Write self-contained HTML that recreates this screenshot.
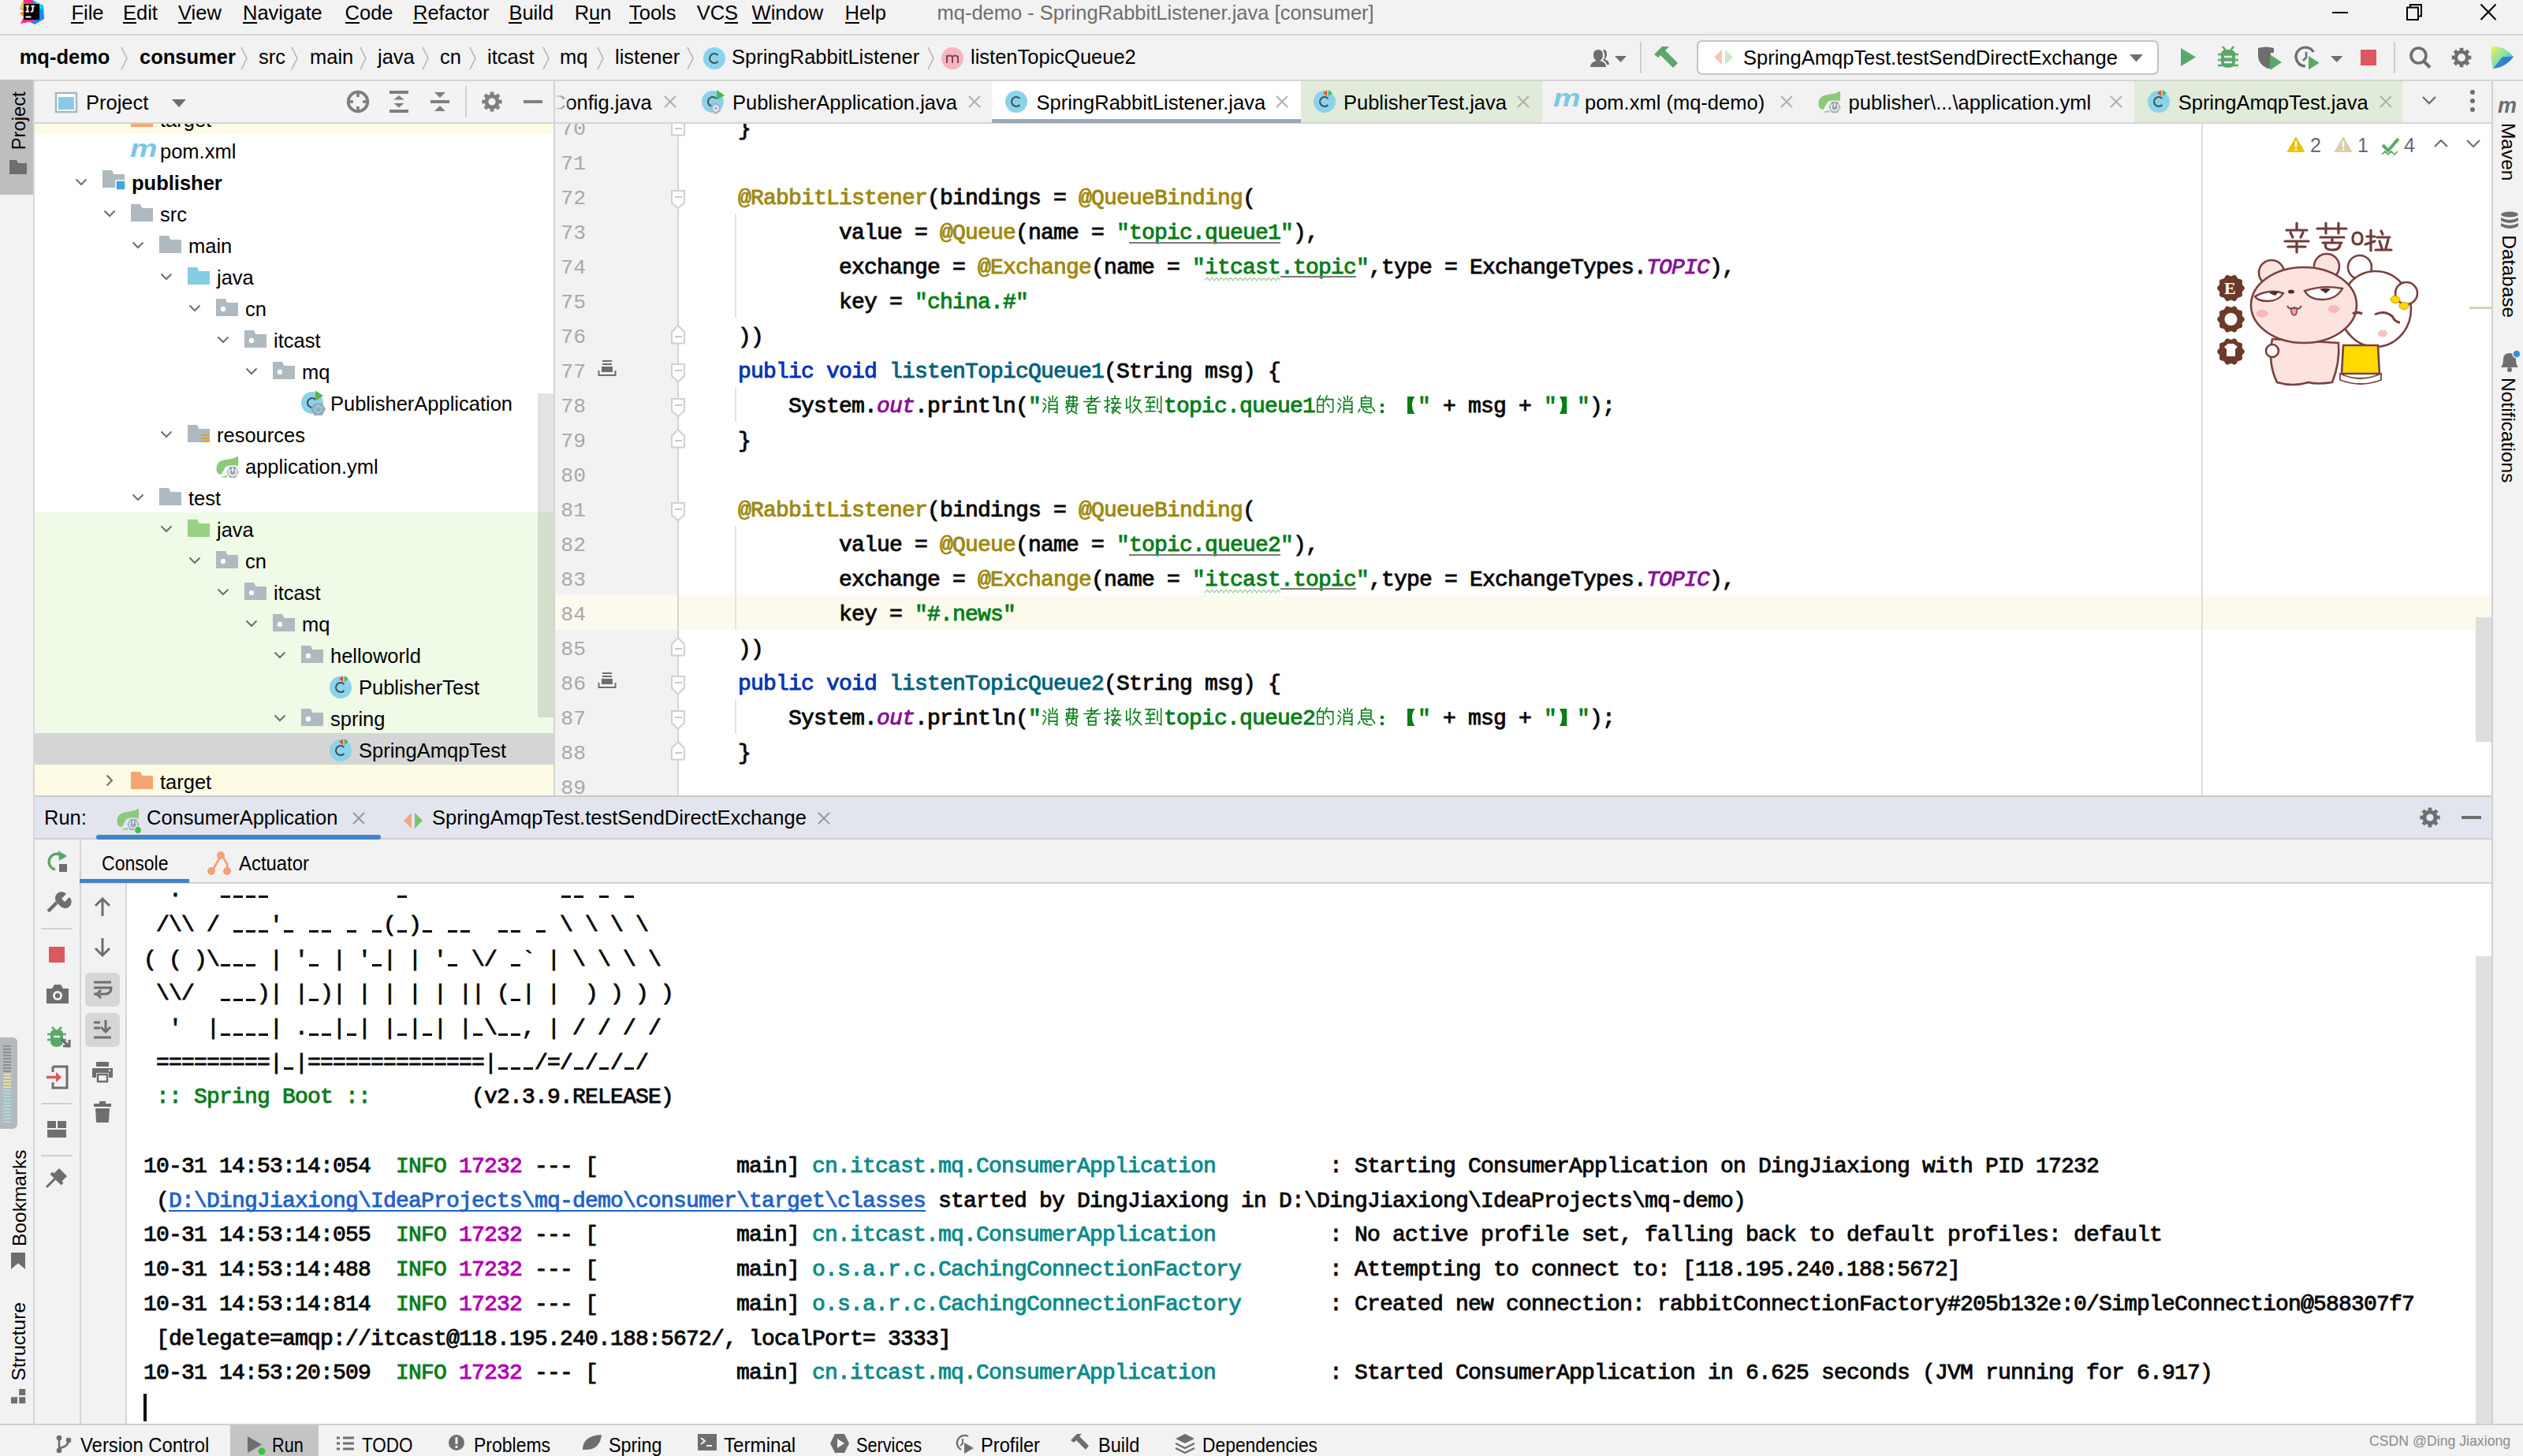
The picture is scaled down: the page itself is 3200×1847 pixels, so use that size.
<!DOCTYPE html><html><head><meta charset="utf-8"><style>html,body{margin:0;padding:0;width:3200px;height:1847px;overflow:hidden;background:#f2f2f2;position:relative}</style></head><body><div style="position:absolute;left:0px;top:0px;width:3200px;height:43px;background:#f2f2f2;"></div>
<div style="position:absolute;left:0px;top:43px;width:3200px;height:2px;background:#d6d6d6;"></div>
<svg style="position:absolute;left:22px;top:0px;overflow:visible;" width="36" height="33" viewBox="0 0 36 33"><path d="M19 0 L33 7 L34 24 L22 31 L12 26 L12 4 Z" fill="#0a8cf8"/>
<path d="M19 0 L33 7 L31 13 L24 5 Z" fill="#12d6f8"/>
<path d="M8 0 L19 0 L22 6 L10 14 L3 11 Z" fill="#ff2a7a"/>
<path d="M8 0 L3 11 L9 12 Z" fill="#ffc83a"/>
<path d="M3 17 L10 13 L11 24 Z" fill="#ff8a1a"/>
<path d="M4 30 L9 20 L24 26 Z" fill="#ff2a8a"/>
<rect x="8" y="5" width="20" height="20" fill="#000"/>
<path d="M10.5 7.8 h4.4 M12.7 7.8 v7 M10.5 14.8 h4.4 M17.5 7.8 h4.2 M19.6 7.8 v5.2 q0 1.8 -1.8 1.8 h-1" stroke="#fff" stroke-width="1.9" fill="none"/>
<rect x="10.5" y="20.5" width="7" height="2" fill="#fff"/></svg>
<div style="position:absolute;left:90.4px;top:1.54px;font-family:'Liberation Sans', sans-serif;font-size:25.5px;color:#000;font-weight:400;white-space:pre;line-height:normal;">File</div>
<div style="position:absolute;left:90.4px;top:28px;width:15.6px;height:2px;background:#000;"></div>
<div style="position:absolute;left:156px;top:1.54px;font-family:'Liberation Sans', sans-serif;font-size:25.5px;color:#000;font-weight:400;white-space:pre;line-height:normal;">Edit</div>
<div style="position:absolute;left:156.0px;top:28px;width:17.0px;height:2px;background:#000;"></div>
<div style="position:absolute;left:226px;top:1.54px;font-family:'Liberation Sans', sans-serif;font-size:25.5px;color:#000;font-weight:400;white-space:pre;line-height:normal;">View</div>
<div style="position:absolute;left:226.0px;top:28px;width:17.0px;height:2px;background:#000;"></div>
<div style="position:absolute;left:308px;top:1.54px;font-family:'Liberation Sans', sans-serif;font-size:25.5px;color:#000;font-weight:400;white-space:pre;line-height:normal;">Navigate</div>
<div style="position:absolute;left:308.0px;top:28px;width:18.4px;height:2px;background:#000;"></div>
<div style="position:absolute;left:437.6px;top:1.54px;font-family:'Liberation Sans', sans-serif;font-size:25.5px;color:#000;font-weight:400;white-space:pre;line-height:normal;">Code</div>
<div style="position:absolute;left:437.6px;top:28px;width:18.4px;height:2px;background:#000;"></div>
<div style="position:absolute;left:524px;top:1.54px;font-family:'Liberation Sans', sans-serif;font-size:25.5px;color:#000;font-weight:400;white-space:pre;line-height:normal;">Refactor</div>
<div style="position:absolute;left:524.0px;top:28px;width:18.4px;height:2px;background:#000;"></div>
<div style="position:absolute;left:645.4px;top:1.54px;font-family:'Liberation Sans', sans-serif;font-size:25.5px;color:#000;font-weight:400;white-space:pre;line-height:normal;">Build</div>
<div style="position:absolute;left:645.4px;top:28px;width:17.0px;height:2px;background:#000;"></div>
<div style="position:absolute;left:728.7px;top:1.54px;font-family:'Liberation Sans', sans-serif;font-size:25.5px;color:#000;font-weight:400;white-space:pre;line-height:normal;">Run</div>
<div style="position:absolute;left:747.1px;top:28px;width:14.2px;height:2px;background:#000;"></div>
<div style="position:absolute;left:798px;top:1.54px;font-family:'Liberation Sans', sans-serif;font-size:25.5px;color:#000;font-weight:400;white-space:pre;line-height:normal;">Tools</div>
<div style="position:absolute;left:798.0px;top:28px;width:15.6px;height:2px;background:#000;"></div>
<div style="position:absolute;left:883.7px;top:1.54px;font-family:'Liberation Sans', sans-serif;font-size:25.5px;color:#000;font-weight:400;white-space:pre;line-height:normal;">VCS</div>
<div style="position:absolute;left:919.1px;top:28px;width:17.0px;height:2px;background:#000;"></div>
<div style="position:absolute;left:953.6px;top:1.54px;font-family:'Liberation Sans', sans-serif;font-size:25.5px;color:#000;font-weight:400;white-space:pre;line-height:normal;">Window</div>
<div style="position:absolute;left:953.6px;top:28px;width:24.1px;height:2px;background:#000;"></div>
<div style="position:absolute;left:1071.6px;top:1.54px;font-family:'Liberation Sans', sans-serif;font-size:25.5px;color:#000;font-weight:400;white-space:pre;line-height:normal;">Help</div>
<div style="position:absolute;left:1071.6px;top:28px;width:18.4px;height:2px;background:#000;"></div>
<div style="position:absolute;left:1188.5px;top:1.54px;font-family:'Liberation Sans', sans-serif;font-size:25.5px;color:#6e6e6e;font-weight:400;white-space:pre;line-height:normal;">mq-demo - SpringRabbitListener.java [consumer]</div>
<div style="position:absolute;left:2958px;top:15px;width:20px;height:2px;background:#000;"></div>
<svg style="position:absolute;left:3050px;top:4px;overflow:visible;" width="24" height="23" viewBox="0 0 24 23"><rect x="3" y="5.5" width="14" height="15.5" fill="none" stroke="#000" stroke-width="2"/><path d="M7 5 V2 H21 V16.5 H17.5" fill="none" stroke="#000" stroke-width="2"/></svg>
<svg style="position:absolute;left:3144px;top:4px;overflow:visible;" width="24" height="23" viewBox="0 0 24 23"><path d="M2.5 1.5 L21.5 21 M21.5 1.5 L2.5 21" stroke="#000" stroke-width="2"/></svg>
<div style="position:absolute;left:0px;top:45px;width:3200px;height:56px;background:#f2f2f2;"></div>
<div style="position:absolute;left:0px;top:101px;width:3200px;height:2px;background:#d4d4d4;"></div>
<div style="position:absolute;left:24.7px;top:57.54px;font-family:'Liberation Sans', sans-serif;font-size:25.5px;color:#000;font-weight:700;white-space:pre;line-height:normal;">mq-demo</div>
<div style="position:absolute;left:177px;top:57.54px;font-family:'Liberation Sans', sans-serif;font-size:25.5px;color:#000;font-weight:700;white-space:pre;line-height:normal;">consumer</div>
<div style="position:absolute;left:328px;top:57.54px;font-family:'Liberation Sans', sans-serif;font-size:25.5px;color:#000;font-weight:400;white-space:pre;line-height:normal;">src</div>
<div style="position:absolute;left:393px;top:57.54px;font-family:'Liberation Sans', sans-serif;font-size:25.5px;color:#000;font-weight:400;white-space:pre;line-height:normal;">main</div>
<div style="position:absolute;left:479px;top:57.54px;font-family:'Liberation Sans', sans-serif;font-size:25.5px;color:#000;font-weight:400;white-space:pre;line-height:normal;">java</div>
<div style="position:absolute;left:558px;top:57.54px;font-family:'Liberation Sans', sans-serif;font-size:25.5px;color:#000;font-weight:400;white-space:pre;line-height:normal;">cn</div>
<div style="position:absolute;left:618px;top:57.54px;font-family:'Liberation Sans', sans-serif;font-size:25.5px;color:#000;font-weight:400;white-space:pre;line-height:normal;">itcast</div>
<div style="position:absolute;left:710px;top:57.54px;font-family:'Liberation Sans', sans-serif;font-size:25.5px;color:#000;font-weight:400;white-space:pre;line-height:normal;">mq</div>
<div style="position:absolute;left:780px;top:57.54px;font-family:'Liberation Sans', sans-serif;font-size:25.5px;color:#000;font-weight:400;white-space:pre;line-height:normal;">listener</div>
<div style="position:absolute;left:928px;top:57.54px;font-family:'Liberation Sans', sans-serif;font-size:25.5px;color:#000;font-weight:400;white-space:pre;line-height:normal;">SpringRabbitListener</div>
<div style="position:absolute;left:1231px;top:57.54px;font-family:'Liberation Sans', sans-serif;font-size:25.5px;color:#000;font-weight:400;white-space:pre;line-height:normal;">listenTopicQueue2</div>
<svg style="position:absolute;left:152px;top:58px;overflow:visible;" width="12" height="32" viewBox="0 0 12 32"><path d="M2 2 L9 16 L2 30" fill="none" stroke="#b5b5b5" stroke-width="1.6"/></svg>
<svg style="position:absolute;left:304px;top:58px;overflow:visible;" width="12" height="32" viewBox="0 0 12 32"><path d="M2 2 L9 16 L2 30" fill="none" stroke="#b5b5b5" stroke-width="1.6"/></svg>
<svg style="position:absolute;left:368px;top:58px;overflow:visible;" width="12" height="32" viewBox="0 0 12 32"><path d="M2 2 L9 16 L2 30" fill="none" stroke="#b5b5b5" stroke-width="1.6"/></svg>
<svg style="position:absolute;left:455px;top:58px;overflow:visible;" width="12" height="32" viewBox="0 0 12 32"><path d="M2 2 L9 16 L2 30" fill="none" stroke="#b5b5b5" stroke-width="1.6"/></svg>
<svg style="position:absolute;left:534px;top:58px;overflow:visible;" width="12" height="32" viewBox="0 0 12 32"><path d="M2 2 L9 16 L2 30" fill="none" stroke="#b5b5b5" stroke-width="1.6"/></svg>
<svg style="position:absolute;left:594px;top:58px;overflow:visible;" width="12" height="32" viewBox="0 0 12 32"><path d="M2 2 L9 16 L2 30" fill="none" stroke="#b5b5b5" stroke-width="1.6"/></svg>
<svg style="position:absolute;left:687px;top:58px;overflow:visible;" width="12" height="32" viewBox="0 0 12 32"><path d="M2 2 L9 16 L2 30" fill="none" stroke="#b5b5b5" stroke-width="1.6"/></svg>
<svg style="position:absolute;left:756px;top:58px;overflow:visible;" width="12" height="32" viewBox="0 0 12 32"><path d="M2 2 L9 16 L2 30" fill="none" stroke="#b5b5b5" stroke-width="1.6"/></svg>
<svg style="position:absolute;left:870px;top:58px;overflow:visible;" width="12" height="32" viewBox="0 0 12 32"><path d="M2 2 L9 16 L2 30" fill="none" stroke="#b5b5b5" stroke-width="1.6"/></svg>
<svg style="position:absolute;left:1175px;top:58px;overflow:visible;" width="12" height="32" viewBox="0 0 12 32"><path d="M2 2 L9 16 L2 30" fill="none" stroke="#b5b5b5" stroke-width="1.6"/></svg>
<svg style="position:absolute;left:890px;top:58px;overflow:visible;" width="32" height="32" viewBox="0 0 32 32"><circle cx="16" cy="16" r="14" fill="#8bd3eb"/><path d="M20.5 12 A6 6 0 1 0 20.5 20" fill="none" stroke="#3f4f57" stroke-width="2"/></svg>
<svg style="position:absolute;left:1193px;top:58px;overflow:visible;" width="32" height="32" viewBox="0 0 32 32"><circle cx="15" cy="16" r="14" fill="#f5b5c0"/><path d="M8 22 V12 M8 14 q3.5-3 7 0 V22 M15 14 q3.5-3 7 0 V22" fill="none" stroke="#7a4650" stroke-width="2"/></svg>
<svg style="position:absolute;left:2012px;top:58px;overflow:visible;" width="56" height="30" viewBox="0 0 56 30"><path d="M5 27 q0-6 8-8 q-4-2-4-7 q0-7 6-7 q6 0 6 7 q0 5-4 7 q8 2 8 8 z" fill="#6e6e6e"/>
<path d="M21 5 q5-1 5 6 q0 4-3 6 q6 2 6 7 h-3 q-1-4-5-6 q3-3 2-8 z" fill="#6e6e6e"/>
<path d="M36 13 h15 l-7.5 8 z" fill="#6e6e6e"/></svg>
<div style="position:absolute;left:2080px;top:53px;width:2px;height:40px;background:#cfcfcf;"></div>
<svg style="position:absolute;left:2096px;top:58px;overflow:visible;" width="34" height="30" viewBox="0 0 34 30"><path d="M2 11 L12 1 L21 1 L16 6 L32 22 L26 28 L10 12 L7 15 Z" fill="#59a869"/></svg>
<div style="position:absolute;left:2152px;top:51px;width:586px;height:44px;background:#fff;border:2px solid #c4c4c4;border-radius:7px;box-sizing:border-box;"></div>
<svg style="position:absolute;left:2172px;top:62px;overflow:visible;" width="30" height="22" viewBox="0 0 30 22"><path d="M12 1 V20 L2 10.5 Z" fill="#f5c7b6"/><path d="M16 1 V20 L26 10.5 Z" fill="#cfe8c4"/></svg>
<div style="position:absolute;left:2211px;top:59.14px;font-family:'Liberation Sans', sans-serif;font-size:25.5px;color:#000;font-weight:400;white-space:pre;line-height:normal;">SpringAmqpTest.testSendDirectExchange</div>
<svg style="position:absolute;left:2700px;top:68px;overflow:visible;" width="20" height="12" viewBox="0 0 20 12"><path d="M1 1 H18 L9.5 10.5 Z" fill="#6e6e6e"/></svg>
<svg style="position:absolute;left:2765px;top:60px;overflow:visible;" width="22" height="26" viewBox="0 0 22 26"><path d="M1 1 L20 12.5 L1 24 Z" fill="#59a869"/></svg>
<svg style="position:absolute;left:2812px;top:58px;overflow:visible;" width="28" height="30" viewBox="0 0 28 30"><path d="M7 1 L11 6 M21 1 L17 6" stroke="#59a869" stroke-width="2.6"/>
<path d="M5 10 q0-5 9-5 q9 0 9 5 v10 q0 8-9 8 q-9 0-9-8 z" fill="#59a869"/>
<path d="M1 11 h26 M1 18 h26 M1 25 h26" stroke="#59a869" stroke-width="2.6"/>
<path d="M9 14 h10 M9 21 h10" stroke="#f2f2f2" stroke-width="2.6"/></svg>
<svg style="position:absolute;left:2862px;top:58px;overflow:visible;" width="34" height="32" viewBox="0 0 34 32"><path d="M2 3 q10-3 20 0 v6 h-4 v16 l2 2 q-3 2-6 2 q-12-6-12-16 z" fill="#6e6e6e"/>
<path d="M17 11 L32 21 L17 31 Z" fill="#59a869"/></svg>
<svg style="position:absolute;left:2908px;top:56px;overflow:visible;" width="36" height="34" viewBox="0 0 36 34"><path d="M26.3 10 A11.9 11.9 0 1 0 15.8 27.9" fill="none" stroke="#6e6e6e" stroke-width="3.4"/>
<path d="M17 10 V17 L13 21" fill="none" stroke="#6e6e6e" stroke-width="2.6"/>
<path d="M20 15 L33.6 23.8 L20 32.6 Z" fill="#59a869"/></svg>
<svg style="position:absolute;left:2956px;top:71px;overflow:visible;" width="16" height="9" viewBox="0 0 16 9"><path d="M0 0 H15.5 L7.75 8 Z" fill="#6e6e6e"/></svg>
<div style="position:absolute;left:2994px;top:63px;width:20px;height:20px;background:#db5860;"></div>
<div style="position:absolute;left:3036px;top:53px;width:2px;height:40px;background:#cfcfcf;"></div>
<svg style="position:absolute;left:3052px;top:56px;overflow:visible;" width="34" height="34" viewBox="0 0 34 34"><circle cx="15.5" cy="14.5" r="9.5" fill="none" stroke="#6e6e6e" stroke-width="3.6"/><path d="M22 21.5 L30 29.5" stroke="#6e6e6e" stroke-width="4"/></svg>
<svg style="position:absolute;left:3108px;top:59px;overflow:visible;" width="28" height="28" viewBox="0 0 28 28"><path d="M26.3 11.6 L26.3 16.4 L22.7 16.3 L21.8 18.6 L24.4 21.0 L21.0 24.4 L18.6 21.8 L16.3 22.7 L16.4 26.3 L11.6 26.3 L11.7 22.7 L9.4 21.8 L7.0 24.4 L3.6 21.0 L6.2 18.6 L5.3 16.3 L1.7 16.4 L1.7 11.6 L5.3 11.7 L6.2 9.4 L3.6 7.0 L7.0 3.6 L9.4 6.2 L11.7 5.3 L11.6 1.7 L16.4 1.7 L16.3 5.3 L18.6 6.2 L21.0 3.6 L24.4 7.0 L21.8 9.4 L22.7 11.7Z" fill="#6e6e6e"/><circle cx="14" cy="14" r="9.4" fill="#6e6e6e"/><circle cx="14" cy="14" r="5" fill="#f2f2f2"/></svg>
<svg style="position:absolute;left:3158px;top:57px;overflow:visible;" width="32" height="32" viewBox="0 0 32 32"><defs><linearGradient id="jbg" x1="0" y1="0" x2="1" y2="1"><stop offset="0" stop-color="#f8f052"/><stop offset="0.5" stop-color="#7fe0b0"/><stop offset="1" stop-color="#1a8ef0"/></linearGradient></defs>
<path d="M2 2 Q18 0 30 15 Q18 30 4 30 Q0 16 2 2 Z" fill="url(#jbg)"/><path d="M16 15 L30 15 Q20 28 4 30 Z" fill="#1f5fd0" opacity="0.7"/></svg>
<div style="position:absolute;left:0px;top:103px;width:42px;height:1705px;background:#f2f2f2;"></div>
<div style="position:absolute;left:42px;top:103px;width:2px;height:1705px;background:#d8d8d8;"></div>
<div style="position:absolute;left:0px;top:101px;width:42px;height:146px;background:#bebebe;"></div>
<div style="position:absolute;left:-13.0px;top:138.7px;width:74.1px;height:28.6px;line-height:28.6px;font-family:'Liberation Sans', sans-serif;font-size:23.8px;color:#000;white-space:pre;transform:rotate(-90deg);transform-origin:50% 50%;text-align:center">Project</div>
<svg style="position:absolute;left:12px;top:203px;overflow:visible;" width="22" height="18" viewBox="0 0 22 18"><path d="M0 0 H9 L11 4 H22 V18 H0 Z" fill="#6e6e6e"/></svg>
<div style="position:absolute;left:0px;top:1316px;width:22px;height:116px;background:#b5b8bd;border-radius:0 6px 6px 0;"></div>
<svg style="position:absolute;left:2px;top:1326px;overflow:visible;" width="14" height="100" viewBox="0 0 14 100"><rect x="2" y="0" width="10" height="2" fill="#8a8d92"/><rect x="2" y="4" width="10" height="2" fill="#8a8d92"/><rect x="2" y="8" width="10" height="2" fill="#8a8d92"/><rect x="2" y="12" width="10" height="2" fill="#8a8d92"/><rect x="2" y="16" width="10" height="2" fill="#8a8d92"/><rect x="2" y="20" width="10" height="2" fill="#8a8d92"/><rect x="2" y="24" width="10" height="2" fill="#8a8d92"/><rect x="2" y="28" width="10" height="2" fill="#8a8d92"/><rect x="2" y="32" width="10" height="2" fill="#8a8d92"/><rect x="2" y="36" width="10" height="2" fill="#e8e0a0"/><rect x="2" y="40" width="10" height="2" fill="#e8e0a0"/><rect x="2" y="44" width="10" height="2" fill="#e8e0a0"/><rect x="2" y="48" width="10" height="2" fill="#e8e0a0"/><rect x="2" y="52" width="10" height="2" fill="#e8e0a0"/><rect x="2" y="56" width="10" height="2" fill="#a8dcd4"/><rect x="2" y="60" width="10" height="2" fill="#a8dcd4"/><rect x="2" y="64" width="10" height="2" fill="#a8dcd4"/><rect x="2" y="68" width="10" height="2" fill="#a8dcd4"/><rect x="2" y="72" width="10" height="2" fill="#a8dcd4"/><rect x="2" y="76" width="10" height="2" fill="#a8dcd4"/><rect x="2" y="80" width="10" height="2" fill="#a8dcd4"/><rect x="2" y="84" width="10" height="2" fill="#a8dcd4"/><rect x="2" y="88" width="10" height="2" fill="#a8dcd4"/><rect x="2" y="92" width="10" height="2" fill="#a8dcd4"/><rect x="2" y="96" width="10" height="2" fill="#a8dcd4"/></svg>
<div style="position:absolute;left:-37.3px;top:1505.3px;width:122.5px;height:29.4px;line-height:29.4px;font-family:'Liberation Sans', sans-serif;font-size:24.5px;color:#000;white-space:pre;transform:rotate(-90deg);transform-origin:50% 50%;text-align:center">Bookmarks</div>
<svg style="position:absolute;left:14px;top:1589px;overflow:visible;" width="19" height="22" viewBox="0 0 19 22"><path d="M0 0 H18 V21 L9 13.5 L0 21 Z" fill="#6e6e6e"/></svg>
<div style="position:absolute;left:-25.7px;top:1687.3px;width:99.4px;height:29.4px;line-height:29.4px;font-family:'Liberation Sans', sans-serif;font-size:24.5px;color:#000;white-space:pre;transform:rotate(-90deg);transform-origin:50% 50%;text-align:center">Structure</div>
<svg style="position:absolute;left:14px;top:1762px;overflow:visible;" width="20" height="20" viewBox="0 0 20 20"><rect x="10.2" y="0" width="8" height="8" fill="#6e6e6e"/><rect x="0" y="10.3" width="8" height="8" fill="#6e6e6e"/><rect x="10.2" y="10.3" width="8" height="8" fill="#6e6e6e"/></svg>
<div style="position:absolute;left:3160px;top:103px;width:40px;height:1705px;background:#f2f2f2;"></div>
<div style="position:absolute;left:3160px;top:103px;width:2px;height:1705px;background:#d0d0d0;"></div>
<svg style="position:absolute;left:3168px;top:124px;overflow:visible;" width="30" height="22" viewBox="0 0 30 22"><text x="0" y="19" font-family="Liberation Sans" font-style="italic" font-weight="700" font-size="27" fill="#6e6e6e">m</text></svg>
<div style="position:absolute;left:3145.2px;top:178.3px;width:73.5px;height:29.4px;line-height:29.4px;font-family:'Liberation Sans', sans-serif;font-size:24.5px;color:#000;white-space:pre;transform:rotate(90deg);transform-origin:50% 50%;text-align:center">Maven</div>
<svg style="position:absolute;left:3170px;top:268px;overflow:visible;" width="26" height="26" viewBox="0 0 26 26"><ellipse cx="13" cy="4" rx="11" ry="3.5" fill="#6e6e6e"/><path d="M2 8 q11 6 22 0 v4 q-11 6 -22 0 z M2 15 q11 6 22 0 v4 q-11 6 -22 0 z" fill="#6e6e6e"/></svg>
<div style="position:absolute;left:3129.6px;top:336.3px;width:104.9px;height:29.4px;line-height:29.4px;font-family:'Liberation Sans', sans-serif;font-size:24.5px;color:#000;white-space:pre;transform:rotate(90deg);transform-origin:50% 50%;text-align:center">Database</div>
<svg style="position:absolute;left:3168px;top:444px;overflow:visible;" width="30" height="28" viewBox="0 0 30 28"><path d="M4 22 q3-3 3-10 q0-8 8-8 q8 0 8 8 q0 7 3 10 z" fill="#6e6e6e"/><circle cx="15" cy="25" r="3" fill="#6e6e6e"/><circle cx="24" cy="5" r="5" fill="#3d8fd6" stroke="#f2f2f2" stroke-width="1.5"/></svg>
<div style="position:absolute;left:3115.3px;top:531.3px;width:133.4px;height:29.4px;line-height:29.4px;font-family:'Liberation Sans', sans-serif;font-size:24.5px;color:#000;white-space:pre;transform:rotate(90deg);transform-origin:50% 50%;text-align:center">Notifications</div>
<div style="position:absolute;left:44px;top:103px;width:658px;height:52px;background:#f3f3f3;"></div>
<div style="position:absolute;left:44px;top:155px;width:658px;height:2px;background:#d4d4d4;"></div>
<div style="position:absolute;left:702px;top:103px;width:2px;height:1705px;background:#d4d4d4;"></div>
<svg style="position:absolute;left:70px;top:117px;overflow:visible;" width="28" height="26" viewBox="0 0 28 26"><rect x="1" y="1" width="26" height="24" fill="#fff" stroke="#a9b7c1" stroke-width="2.5"/><rect x="4" y="6" width="20" height="16" fill="#87cce6"/></svg>
<div style="position:absolute;left:109px;top:115.54px;font-family:'Liberation Sans', sans-serif;font-size:25.5px;color:#000;font-weight:400;white-space:pre;line-height:normal;">Project</div>
<svg style="position:absolute;left:218px;top:126px;overflow:visible;" width="19" height="11" viewBox="0 0 19 11"><path d="M0 0 H18 L9 10 Z" fill="#6e6e6e"/></svg>
<svg style="position:absolute;left:438px;top:113px;overflow:visible;" width="32" height="32" viewBox="0 0 32 32"><circle cx="16" cy="16" r="12.3" fill="none" stroke="#7f7f7f" stroke-width="3.8"/><path d="M16 2 V10 M16 22 V30 M2 16 H10 M22 16 H30" stroke="#7f7f7f" stroke-width="3.6"/></svg>
<svg style="position:absolute;left:494px;top:114px;overflow:visible;" width="24" height="30" viewBox="0 0 24 30"><rect x="0" y="1" width="24" height="4" fill="#7f7f7f"/><rect x="0" y="25" width="24" height="4" fill="#7f7f7f"/><path d="M5.5 12.5 L12 7 L18.5 12.5 Z M5.5 17 L12 22.5 L18.5 17 Z" fill="#7f7f7f"/></svg>
<svg style="position:absolute;left:546px;top:116px;overflow:visible;" width="24" height="26" viewBox="0 0 24 26"><rect x="0" y="11" width="24" height="4" fill="#7f7f7f"/><path d="M5 1 H19 L12 8 Z M5 25 H19 L12 18 Z" fill="#7f7f7f"/></svg>
<div style="position:absolute;left:590px;top:109px;width:2px;height:40px;background:#d0d0d0;"></div>
<svg style="position:absolute;left:610px;top:115px;overflow:visible;" width="28" height="28" viewBox="0 0 28 28"><path d="M26.6 11.6 L26.6 16.4 L22.9 16.3 L21.9 18.7 L24.6 21.2 L21.2 24.6 L18.7 21.9 L16.3 22.9 L16.4 26.6 L11.6 26.6 L11.7 22.9 L9.3 21.9 L6.8 24.6 L3.4 21.2 L6.1 18.7 L5.1 16.3 L1.4 16.4 L1.4 11.6 L5.1 11.7 L6.1 9.3 L3.4 6.8 L6.8 3.4 L9.3 6.1 L11.7 5.1 L11.6 1.4 L16.4 1.4 L16.3 5.1 L18.7 6.1 L21.2 3.4 L24.6 6.8 L21.9 9.3 L22.9 11.7Z" fill="#7f7f7f"/><circle cx="14" cy="14" r="9.6" fill="#7f7f7f"/><circle cx="14" cy="14" r="4.6" fill="#f3f3f3"/></svg>
<div style="position:absolute;left:664px;top:127px;width:24px;height:4px;background:#7f7f7f;"></div>
<div style="position:absolute;left:44px;top:157px;width:658px;height:1651px;background:#fff;"></div>
<div style="position:absolute;left:0;top:0;width:3200px;height:1847px;clip-path:inset(157px 2498px 838px 44px)">
<div style="position:absolute;left:44px;top:157px;width:658px;height:13px;background:#fdfbe4;"></div>
<div style="position:absolute;left:44px;top:650px;width:658px;height:280px;background:#effae7;"></div>
<div style="position:absolute;left:44px;top:930px;width:658px;height:40px;background:#d5d5d5;"></div>
<div style="position:absolute;left:44px;top:970px;width:658px;height:38px;background:#fdfbe4;"></div>
<svg style="position:absolute;left:134px;top:142px;overflow:visible;" width="10" height="16" viewBox="0 0 10 16"><path d="M1.5 1.5 L8 8 L1.5 14.5" fill="none" stroke="#6e6e6e" stroke-width="2"/></svg>
<svg style="position:absolute;left:166px;top:139px;overflow:visible;" width="30" height="26" viewBox="0 0 30 26"><path d="M0 0 H12 L14.5 5 H28 V22 H0 Z" fill="#f4a672"/></svg>
<div style="position:absolute;left:203px;top:137.54px;font-family:'Liberation Sans', sans-serif;font-size:25.5px;color:#000;font-weight:400;white-space:pre;line-height:normal;">target</div>
<svg style="position:absolute;left:165px;top:178px;overflow:visible;" width="34" height="26" viewBox="0 0 34 26"><text x="0" y="22" font-family="Liberation Sans" font-style="italic" font-weight="700" font-size="37" fill="#7cc7e6" transform="scale(1.05 0.85) translate(0 3)">m</text></svg>
<div style="position:absolute;left:203px;top:177.54px;font-family:'Liberation Sans', sans-serif;font-size:25.5px;color:#000;font-weight:400;white-space:pre;line-height:normal;">pom.xml</div>
<svg style="position:absolute;left:95px;top:226px;overflow:visible;" width="16" height="10" viewBox="0 0 16 10"><path d="M1.5 1.5 L8 8 L14.5 1.5" fill="none" stroke="#6e6e6e" stroke-width="2"/></svg>
<svg style="position:absolute;left:130px;top:216px;overflow:visible;" width="30" height="28" viewBox="0 0 30 28"><path d="M0 0 H12 L14.5 5 H28 V22 H0 Z" fill="#aeb9c0"/><rect x="17" y="13" width="12" height="12" fill="#3ea8de" stroke="#fff" stroke-width="1.5"/></svg>
<div style="position:absolute;left:167px;top:217.54px;font-family:'Liberation Sans', sans-serif;font-size:25.5px;color:#000;font-weight:700;white-space:pre;line-height:normal;">publisher</div>
<svg style="position:absolute;left:131px;top:266px;overflow:visible;" width="16" height="10" viewBox="0 0 16 10"><path d="M1.5 1.5 L8 8 L14.5 1.5" fill="none" stroke="#6e6e6e" stroke-width="2"/></svg>
<svg style="position:absolute;left:166px;top:259px;overflow:visible;" width="30" height="26" viewBox="0 0 30 26"><path d="M0 0 H12 L14.5 5 H28 V22 H0 Z" fill="#aeb9c0"/></svg>
<div style="position:absolute;left:203px;top:257.54px;font-family:'Liberation Sans', sans-serif;font-size:25.5px;color:#000;font-weight:400;white-space:pre;line-height:normal;">src</div>
<svg style="position:absolute;left:167px;top:306px;overflow:visible;" width="16" height="10" viewBox="0 0 16 10"><path d="M1.5 1.5 L8 8 L14.5 1.5" fill="none" stroke="#6e6e6e" stroke-width="2"/></svg>
<svg style="position:absolute;left:202px;top:299px;overflow:visible;" width="30" height="26" viewBox="0 0 30 26"><path d="M0 0 H12 L14.5 5 H28 V22 H0 Z" fill="#aeb9c0"/></svg>
<div style="position:absolute;left:239px;top:297.54px;font-family:'Liberation Sans', sans-serif;font-size:25.5px;color:#000;font-weight:400;white-space:pre;line-height:normal;">main</div>
<svg style="position:absolute;left:203px;top:346px;overflow:visible;" width="16" height="10" viewBox="0 0 16 10"><path d="M1.5 1.5 L8 8 L14.5 1.5" fill="none" stroke="#6e6e6e" stroke-width="2"/></svg>
<svg style="position:absolute;left:238px;top:339px;overflow:visible;" width="30" height="26" viewBox="0 0 30 26"><path d="M0 0 H12 L14.5 5 H28 V22 H0 Z" fill="#87cce6"/></svg>
<div style="position:absolute;left:275px;top:337.54px;font-family:'Liberation Sans', sans-serif;font-size:25.5px;color:#000;font-weight:400;white-space:pre;line-height:normal;">java</div>
<svg style="position:absolute;left:239px;top:386px;overflow:visible;" width="16" height="10" viewBox="0 0 16 10"><path d="M1.5 1.5 L8 8 L14.5 1.5" fill="none" stroke="#6e6e6e" stroke-width="2"/></svg>
<svg style="position:absolute;left:274px;top:379px;overflow:visible;" width="30" height="26" viewBox="0 0 30 26"><path d="M0 0 H12 L14.5 5 H28 V22 H0 Z" fill="#aeb9c0"/><circle cx="9" cy="13" r="3.2" fill="#fff"/></svg>
<div style="position:absolute;left:311px;top:377.54px;font-family:'Liberation Sans', sans-serif;font-size:25.5px;color:#000;font-weight:400;white-space:pre;line-height:normal;">cn</div>
<svg style="position:absolute;left:275px;top:426px;overflow:visible;" width="16" height="10" viewBox="0 0 16 10"><path d="M1.5 1.5 L8 8 L14.5 1.5" fill="none" stroke="#6e6e6e" stroke-width="2"/></svg>
<svg style="position:absolute;left:310px;top:419px;overflow:visible;" width="30" height="26" viewBox="0 0 30 26"><path d="M0 0 H12 L14.5 5 H28 V22 H0 Z" fill="#aeb9c0"/><circle cx="9" cy="13" r="3.2" fill="#fff"/></svg>
<div style="position:absolute;left:347px;top:417.54px;font-family:'Liberation Sans', sans-serif;font-size:25.5px;color:#000;font-weight:400;white-space:pre;line-height:normal;">itcast</div>
<svg style="position:absolute;left:311px;top:466px;overflow:visible;" width="16" height="10" viewBox="0 0 16 10"><path d="M1.5 1.5 L8 8 L14.5 1.5" fill="none" stroke="#6e6e6e" stroke-width="2"/></svg>
<svg style="position:absolute;left:346px;top:459px;overflow:visible;" width="30" height="26" viewBox="0 0 30 26"><path d="M0 0 H12 L14.5 5 H28 V22 H0 Z" fill="#aeb9c0"/><circle cx="9" cy="13" r="3.2" fill="#fff"/></svg>
<div style="position:absolute;left:383px;top:457.54px;font-family:'Liberation Sans', sans-serif;font-size:25.5px;color:#000;font-weight:400;white-space:pre;line-height:normal;">mq</div>
<svg style="position:absolute;left:382px;top:495px;overflow:visible;" width="34" height="34" viewBox="0 0 34 34"><circle cx="14" cy="16" r="14" fill="#8bd3eb"/><path d="M18.5 12 A6 6 0 1 0 18.5 20" fill="none" stroke="#3f4f57" stroke-width="2"/><path d="M18 0.5 L28 7 L18 13.5 Z" fill="#5fb43c"/><path d="M16.5 16.5 h10 l4.5 7.5 l-4.5 8 h-10 l-4.5 -8 z" fill="#9aa7b0"/><circle cx="21.5" cy="24" r="4.3" fill="none" stroke="#8bd3eb" stroke-width="2"/><path d="M21.5 18.5 v5" stroke="#8bd3eb" stroke-width="2"/></svg>
<div style="position:absolute;left:419px;top:497.54px;font-family:'Liberation Sans', sans-serif;font-size:25.5px;color:#000;font-weight:400;white-space:pre;line-height:normal;">PublisherApplication</div>
<svg style="position:absolute;left:203px;top:546px;overflow:visible;" width="16" height="10" viewBox="0 0 16 10"><path d="M1.5 1.5 L8 8 L14.5 1.5" fill="none" stroke="#6e6e6e" stroke-width="2"/></svg>
<svg style="position:absolute;left:238px;top:539px;overflow:visible;" width="30" height="26" viewBox="0 0 30 26"><path d="M0 0 H12 L14.5 5 H28 V22 H0 Z" fill="#aeb9c0"/><path d="M17 13 H28 M17 17 H28 M17 21 H28" stroke="#e0a030" stroke-width="2"/></svg>
<div style="position:absolute;left:275px;top:537.54px;font-family:'Liberation Sans', sans-serif;font-size:25.5px;color:#000;font-weight:400;white-space:pre;line-height:normal;">resources</div>
<svg style="position:absolute;left:274px;top:575px;overflow:visible;" width="34" height="34" viewBox="0 0 34 34"><path d="M0.5 21 Q0 9 13 8 Q23 7 28 3.5 Q28.5 12 27.5 16.5 H12.5 L7 26.5 Q2 28 0.5 21 Z" fill="#8cc97a"/><path d="M6 30.5 Q9 28.5 14.5 28 V30.5 Z" fill="#8cc97a"/><path d="M12.5 24 L16.75 16.3 H25.25 L29.5 24 L25.25 31.7 H16.75 Z" fill="#9aa7b0" stroke="#fff" stroke-width="1.6"/><path d="M18 20.5 A4.6 4.6 0 1 0 24 20.5" fill="none" stroke="#fff" stroke-width="1.8"/><path d="M21 18.5 V23.5" stroke="#fff" stroke-width="1.8"/></svg>
<div style="position:absolute;left:311px;top:577.54px;font-family:'Liberation Sans', sans-serif;font-size:25.5px;color:#000;font-weight:400;white-space:pre;line-height:normal;">application.yml</div>
<svg style="position:absolute;left:167px;top:626px;overflow:visible;" width="16" height="10" viewBox="0 0 16 10"><path d="M1.5 1.5 L8 8 L14.5 1.5" fill="none" stroke="#6e6e6e" stroke-width="2"/></svg>
<svg style="position:absolute;left:202px;top:619px;overflow:visible;" width="30" height="26" viewBox="0 0 30 26"><path d="M0 0 H12 L14.5 5 H28 V22 H0 Z" fill="#aeb9c0"/></svg>
<div style="position:absolute;left:239px;top:617.54px;font-family:'Liberation Sans', sans-serif;font-size:25.5px;color:#000;font-weight:400;white-space:pre;line-height:normal;">test</div>
<svg style="position:absolute;left:203px;top:666px;overflow:visible;" width="16" height="10" viewBox="0 0 16 10"><path d="M1.5 1.5 L8 8 L14.5 1.5" fill="none" stroke="#6e6e6e" stroke-width="2"/></svg>
<svg style="position:absolute;left:238px;top:659px;overflow:visible;" width="30" height="26" viewBox="0 0 30 26"><path d="M0 0 H12 L14.5 5 H28 V22 H0 Z" fill="#99d184"/></svg>
<div style="position:absolute;left:275px;top:657.54px;font-family:'Liberation Sans', sans-serif;font-size:25.5px;color:#000;font-weight:400;white-space:pre;line-height:normal;">java</div>
<svg style="position:absolute;left:239px;top:706px;overflow:visible;" width="16" height="10" viewBox="0 0 16 10"><path d="M1.5 1.5 L8 8 L14.5 1.5" fill="none" stroke="#6e6e6e" stroke-width="2"/></svg>
<svg style="position:absolute;left:274px;top:699px;overflow:visible;" width="30" height="26" viewBox="0 0 30 26"><path d="M0 0 H12 L14.5 5 H28 V22 H0 Z" fill="#aeb9c0"/><circle cx="9" cy="13" r="3.2" fill="#fff"/></svg>
<div style="position:absolute;left:311px;top:697.54px;font-family:'Liberation Sans', sans-serif;font-size:25.5px;color:#000;font-weight:400;white-space:pre;line-height:normal;">cn</div>
<svg style="position:absolute;left:275px;top:746px;overflow:visible;" width="16" height="10" viewBox="0 0 16 10"><path d="M1.5 1.5 L8 8 L14.5 1.5" fill="none" stroke="#6e6e6e" stroke-width="2"/></svg>
<svg style="position:absolute;left:310px;top:739px;overflow:visible;" width="30" height="26" viewBox="0 0 30 26"><path d="M0 0 H12 L14.5 5 H28 V22 H0 Z" fill="#aeb9c0"/><circle cx="9" cy="13" r="3.2" fill="#fff"/></svg>
<div style="position:absolute;left:347px;top:737.54px;font-family:'Liberation Sans', sans-serif;font-size:25.5px;color:#000;font-weight:400;white-space:pre;line-height:normal;">itcast</div>
<svg style="position:absolute;left:311px;top:786px;overflow:visible;" width="16" height="10" viewBox="0 0 16 10"><path d="M1.5 1.5 L8 8 L14.5 1.5" fill="none" stroke="#6e6e6e" stroke-width="2"/></svg>
<svg style="position:absolute;left:346px;top:779px;overflow:visible;" width="30" height="26" viewBox="0 0 30 26"><path d="M0 0 H12 L14.5 5 H28 V22 H0 Z" fill="#aeb9c0"/><circle cx="9" cy="13" r="3.2" fill="#fff"/></svg>
<div style="position:absolute;left:383px;top:777.54px;font-family:'Liberation Sans', sans-serif;font-size:25.5px;color:#000;font-weight:400;white-space:pre;line-height:normal;">mq</div>
<svg style="position:absolute;left:347px;top:826px;overflow:visible;" width="16" height="10" viewBox="0 0 16 10"><path d="M1.5 1.5 L8 8 L14.5 1.5" fill="none" stroke="#6e6e6e" stroke-width="2"/></svg>
<svg style="position:absolute;left:382px;top:819px;overflow:visible;" width="30" height="26" viewBox="0 0 30 26"><path d="M0 0 H12 L14.5 5 H28 V22 H0 Z" fill="#aeb9c0"/><circle cx="9" cy="13" r="3.2" fill="#fff"/></svg>
<div style="position:absolute;left:419px;top:817.54px;font-family:'Liberation Sans', sans-serif;font-size:25.5px;color:#000;font-weight:400;white-space:pre;line-height:normal;">helloworld</div>
<svg style="position:absolute;left:418px;top:855px;overflow:visible;" width="34" height="32" viewBox="0 0 34 32"><circle cx="14" cy="17" r="14" fill="#8bd3eb"/><path d="M18.5 13 A6 6 0 1 0 18.5 21" fill="none" stroke="#3f4f57" stroke-width="2"/><path d="M17 2 L12 6 L17 10 Z" fill="#e4572e"/><path d="M19 2 L24 6 L19 10 Z" fill="#4fb848"/></svg>
<div style="position:absolute;left:455px;top:857.54px;font-family:'Liberation Sans', sans-serif;font-size:25.5px;color:#000;font-weight:400;white-space:pre;line-height:normal;">PublisherTest</div>
<svg style="position:absolute;left:347px;top:906px;overflow:visible;" width="16" height="10" viewBox="0 0 16 10"><path d="M1.5 1.5 L8 8 L14.5 1.5" fill="none" stroke="#6e6e6e" stroke-width="2"/></svg>
<svg style="position:absolute;left:382px;top:899px;overflow:visible;" width="30" height="26" viewBox="0 0 30 26"><path d="M0 0 H12 L14.5 5 H28 V22 H0 Z" fill="#aeb9c0"/><circle cx="9" cy="13" r="3.2" fill="#fff"/></svg>
<div style="position:absolute;left:419px;top:897.54px;font-family:'Liberation Sans', sans-serif;font-size:25.5px;color:#000;font-weight:400;white-space:pre;line-height:normal;">spring</div>
<svg style="position:absolute;left:418px;top:935px;overflow:visible;" width="34" height="32" viewBox="0 0 34 32"><circle cx="14" cy="17" r="14" fill="#8bd3eb"/><path d="M18.5 13 A6 6 0 1 0 18.5 21" fill="none" stroke="#3f4f57" stroke-width="2"/><path d="M17 2 L12 6 L17 10 Z" fill="#e4572e"/><path d="M19 2 L24 6 L19 10 Z" fill="#4fb848"/></svg>
<div style="position:absolute;left:455px;top:937.54px;font-family:'Liberation Sans', sans-serif;font-size:25.5px;color:#000;font-weight:400;white-space:pre;line-height:normal;">SpringAmqpTest</div>
<svg style="position:absolute;left:134px;top:982px;overflow:visible;" width="10" height="16" viewBox="0 0 10 16"><path d="M1.5 1.5 L8 8 L1.5 14.5" fill="none" stroke="#6e6e6e" stroke-width="2"/></svg>
<svg style="position:absolute;left:166px;top:979px;overflow:visible;" width="30" height="26" viewBox="0 0 30 26"><path d="M0 0 H12 L14.5 5 H28 V22 H0 Z" fill="#f4a672"/></svg>
<div style="position:absolute;left:203px;top:977.54px;font-family:'Liberation Sans', sans-serif;font-size:25.5px;color:#000;font-weight:400;white-space:pre;line-height:normal;">target</div>
<div style="position:absolute;left:682px;top:499px;width:20px;height:411px;background:rgba(0,0,0,0.11);"></div>
</div>
<div style="position:absolute;left:704px;top:103px;width:2456px;height:52px;background:#f2f2f2;"></div>
<div style="position:absolute;left:704px;top:155px;width:2456px;height:2px;background:#d4d4d4;"></div>
<div style="position:absolute;left:1258px;top:103px;width:392px;height:52px;background:#fff;"></div>
<div style="position:absolute;left:1258px;top:151px;width:392px;height:5px;background:#9ca7b8;"></div>
<div style="position:absolute;left:1650px;top:103px;width:306px;height:52px;background:#e1ebd9;"></div>
<div style="position:absolute;left:2707px;top:103px;width:340px;height:52px;background:#e1ebd9;"></div>
<div style="position:absolute;left:704px;top:103px;width:130px;height:52px;overflow:hidden">
<div style="position:absolute;left:-5px;top:12.54px;font-family:'Liberation Sans', sans-serif;font-size:25.5px;color:#000;font-weight:400;white-space:pre;line-height:normal;">Config.java</div>
<div style="position:absolute;left:0;top:0;width:22px;height:52px;background:linear-gradient(to right,#f2f2f2 0%,rgba(242,242,242,0.6) 50%,rgba(242,242,242,0) 100%)"></div>
</div>
<svg style="position:absolute;left:842px;top:121px;overflow:visible;" width="16" height="16" viewBox="0 0 16 16"><path d="M1 1 L15 15 M15 1 L1 15" stroke="#b0b0b0" stroke-width="2"/></svg>
<svg style="position:absolute;left:890px;top:113px;overflow:visible;" width="36" height="34" viewBox="0 0 36 34"><circle cx="14" cy="16" r="14" fill="#8bd3eb"/><path d="M18.5 12 A6 6 0 1 0 18.5 20" fill="none" stroke="#3f4f57" stroke-width="2"/><path d="M19 1 L29 8 L19 14 Z" fill="#4fb848"/><path d="M12 21 l6-4 l6 4 v7 l-6 4 l-6-4 z" fill="#a9b7c1"/><circle cx="18" cy="24.5" r="3" fill="none" stroke="#fff" stroke-width="1.3"/></svg>
<div style="position:absolute;left:929px;top:115.54px;font-family:'Liberation Sans', sans-serif;font-size:25.5px;color:#000;font-weight:400;white-space:pre;line-height:normal;">PublisherApplication.java</div>
<svg style="position:absolute;left:1228px;top:121px;overflow:visible;" width="16" height="16" viewBox="0 0 16 16"><path d="M1 1 L15 15 M15 1 L1 15" stroke="#b0b0b0" stroke-width="2"/></svg>
<svg style="position:absolute;left:1275px;top:113px;overflow:visible;" width="30" height="32" viewBox="0 0 30 32"><circle cx="14" cy="16" r="14" fill="#8bd3eb"/><path d="M18.5 12 A6 6 0 1 0 18.5 20" fill="none" stroke="#3f4f57" stroke-width="2"/></svg>
<div style="position:absolute;left:1314.5px;top:115.54px;font-family:'Liberation Sans', sans-serif;font-size:25.5px;color:#000;font-weight:400;white-space:pre;line-height:normal;">SpringRabbitListener.java</div>
<svg style="position:absolute;left:1618px;top:121px;overflow:visible;" width="16" height="16" viewBox="0 0 16 16"><path d="M1 1 L15 15 M15 1 L1 15" stroke="#b0b0b0" stroke-width="2"/></svg>
<svg style="position:absolute;left:1666px;top:111px;overflow:visible;" width="34" height="34" viewBox="0 0 34 34"><circle cx="14" cy="18" r="14" fill="#8bd3eb"/><path d="M18.5 14 A6 6 0 1 0 18.5 22" fill="none" stroke="#3f4f57" stroke-width="2"/><path d="M17 3 L12 7 L17 11 Z" fill="#e4572e"/><path d="M19 3 L24 7 L19 11 Z" fill="#4fb848"/></svg>
<div style="position:absolute;left:1704px;top:115.54px;font-family:'Liberation Sans', sans-serif;font-size:25.5px;color:#000;font-weight:400;white-space:pre;line-height:normal;">PublisherTest.java</div>
<svg style="position:absolute;left:1924px;top:121px;overflow:visible;" width="16" height="16" viewBox="0 0 16 16"><path d="M1 1 L15 15 M15 1 L1 15" stroke="#b0b0b0" stroke-width="2"/></svg>
<svg style="position:absolute;left:1970px;top:114px;overflow:visible;" width="34" height="26" viewBox="0 0 34 26"><text x="0" y="22" font-family="Liberation Sans" font-style="italic" font-weight="700" font-size="37" fill="#7cc7e6" transform="scale(1.05 0.85) translate(0 3)">m</text></svg>
<div style="position:absolute;left:2010px;top:115.54px;font-family:'Liberation Sans', sans-serif;font-size:25.5px;color:#000;font-weight:400;white-space:pre;line-height:normal;">pom.xml (mq-demo)</div>
<svg style="position:absolute;left:2258px;top:121px;overflow:visible;" width="16" height="16" viewBox="0 0 16 16"><path d="M1 1 L15 15 M15 1 L1 15" stroke="#b0b0b0" stroke-width="2"/></svg>
<svg style="position:absolute;left:2306px;top:112px;overflow:visible;" width="34" height="34" viewBox="0 0 34 34"><path d="M0.5 21 Q0 9 13 8 Q23 7 28 3.5 Q28.5 12 27.5 16.5 H12.5 L7 26.5 Q2 28 0.5 21 Z" fill="#8cc97a"/><path d="M6 30.5 Q9 28.5 14.5 28 V30.5 Z" fill="#8cc97a"/><path d="M12.5 24 L16.75 16.3 H25.25 L29.5 24 L25.25 31.7 H16.75 Z" fill="#9aa7b0" stroke="#f2f2f2" stroke-width="1.6"/><path d="M18 20.5 A4.6 4.6 0 1 0 24 20.5" fill="none" stroke="#f2f2f2" stroke-width="1.8"/><path d="M21 18.5 V23.5" stroke="#f2f2f2" stroke-width="1.8"/></svg>
<div style="position:absolute;left:2344.6px;top:115.54px;font-family:'Liberation Sans', sans-serif;font-size:25.5px;color:#000;font-weight:400;white-space:pre;line-height:normal;">publisher\...\application.yml</div>
<svg style="position:absolute;left:2676px;top:121px;overflow:visible;" width="16" height="16" viewBox="0 0 16 16"><path d="M1 1 L15 15 M15 1 L1 15" stroke="#b0b0b0" stroke-width="2"/></svg>
<svg style="position:absolute;left:2724px;top:111px;overflow:visible;" width="34" height="34" viewBox="0 0 34 34"><circle cx="14" cy="18" r="14" fill="#8bd3eb"/><path d="M18.5 14 A6 6 0 1 0 18.5 22" fill="none" stroke="#3f4f57" stroke-width="2"/><path d="M17 3 L12 7 L17 11 Z" fill="#e4572e"/><path d="M19 3 L24 7 L19 11 Z" fill="#4fb848"/></svg>
<div style="position:absolute;left:2762.7px;top:115.54px;font-family:'Liberation Sans', sans-serif;font-size:25.5px;color:#000;font-weight:400;white-space:pre;line-height:normal;">SpringAmqpTest.java</div>
<svg style="position:absolute;left:3018px;top:121px;overflow:visible;" width="16" height="16" viewBox="0 0 16 16"><path d="M1 1 L15 15 M15 1 L1 15" stroke="#b0b0b0" stroke-width="2"/></svg>
<svg style="position:absolute;left:3071px;top:121px;overflow:visible;" width="20" height="14" viewBox="0 0 20 14"><path d="M2 2 L10 10 L18 2" fill="none" stroke="#6e6e6e" stroke-width="2.4"/></svg>
<svg style="position:absolute;left:3131px;top:113px;overflow:visible;" width="10" height="30" viewBox="0 0 10 30"><circle cx="5" cy="4" r="3" fill="#6e6e6e"/><circle cx="5" cy="15" r="3" fill="#6e6e6e"/><circle cx="5" cy="26" r="3" fill="#6e6e6e"/></svg>
<div style="position:absolute;left:704px;top:157px;width:2456px;height:852px;background:#fff;"></div>
<div style="position:absolute;left:704px;top:157px;width:155px;height:852px;background:#f2f2f2;"></div>
<div style="position:absolute;left:859px;top:157px;width:2px;height:852px;background:#d5d5d5;"></div>
<div style="position:absolute;left:704px;top:755px;width:2456px;height:44px;background:#fcfaed;"></div>
<div style="position:absolute;left:859px;top:755px;width:2px;height:44px;background:#d5d5d5;"></div>
<div style="position:absolute;left:2792px;top:157px;width:2px;height:852px;background:#dedede;"></div>
<div style="position:absolute;left:704px;top:157px;width:2456px;height:852px;overflow:hidden">
<div style="position:absolute;left:7.3px;top:-7.9px;font-family:'Liberation Mono', monospace;font-size:26.4px;color:#a8a8a8;white-space:pre;line-height:normal">70</div>
<div style="position:absolute;left:7.3px;top:36.1px;font-family:'Liberation Mono', monospace;font-size:26.4px;color:#a8a8a8;white-space:pre;line-height:normal">71</div>
<div style="position:absolute;left:7.3px;top:80.1px;font-family:'Liberation Mono', monospace;font-size:26.4px;color:#a8a8a8;white-space:pre;line-height:normal">72</div>
<div style="position:absolute;left:7.3px;top:124.1px;font-family:'Liberation Mono', monospace;font-size:26.4px;color:#a8a8a8;white-space:pre;line-height:normal">73</div>
<div style="position:absolute;left:7.3px;top:168.1px;font-family:'Liberation Mono', monospace;font-size:26.4px;color:#a8a8a8;white-space:pre;line-height:normal">74</div>
<div style="position:absolute;left:7.3px;top:212.1px;font-family:'Liberation Mono', monospace;font-size:26.4px;color:#a8a8a8;white-space:pre;line-height:normal">75</div>
<div style="position:absolute;left:7.3px;top:256.1px;font-family:'Liberation Mono', monospace;font-size:26.4px;color:#a8a8a8;white-space:pre;line-height:normal">76</div>
<div style="position:absolute;left:7.3px;top:300.1px;font-family:'Liberation Mono', monospace;font-size:26.4px;color:#a8a8a8;white-space:pre;line-height:normal">77</div>
<div style="position:absolute;left:7.3px;top:344.1px;font-family:'Liberation Mono', monospace;font-size:26.4px;color:#a8a8a8;white-space:pre;line-height:normal">78</div>
<div style="position:absolute;left:7.3px;top:388.1px;font-family:'Liberation Mono', monospace;font-size:26.4px;color:#a8a8a8;white-space:pre;line-height:normal">79</div>
<div style="position:absolute;left:7.3px;top:432.1px;font-family:'Liberation Mono', monospace;font-size:26.4px;color:#a8a8a8;white-space:pre;line-height:normal">80</div>
<div style="position:absolute;left:7.3px;top:476.1px;font-family:'Liberation Mono', monospace;font-size:26.4px;color:#a8a8a8;white-space:pre;line-height:normal">81</div>
<div style="position:absolute;left:7.3px;top:520.1px;font-family:'Liberation Mono', monospace;font-size:26.4px;color:#a8a8a8;white-space:pre;line-height:normal">82</div>
<div style="position:absolute;left:7.3px;top:564.1px;font-family:'Liberation Mono', monospace;font-size:26.4px;color:#a8a8a8;white-space:pre;line-height:normal">83</div>
<div style="position:absolute;left:7.3px;top:608.1px;font-family:'Liberation Mono', monospace;font-size:26.4px;color:#a8a8a8;white-space:pre;line-height:normal">84</div>
<div style="position:absolute;left:7.3px;top:652.1px;font-family:'Liberation Mono', monospace;font-size:26.4px;color:#a8a8a8;white-space:pre;line-height:normal">85</div>
<div style="position:absolute;left:7.3px;top:696.1px;font-family:'Liberation Mono', monospace;font-size:26.4px;color:#a8a8a8;white-space:pre;line-height:normal">86</div>
<div style="position:absolute;left:7.3px;top:740.1px;font-family:'Liberation Mono', monospace;font-size:26.4px;color:#a8a8a8;white-space:pre;line-height:normal">87</div>
<div style="position:absolute;left:7.3px;top:784.1px;font-family:'Liberation Mono', monospace;font-size:26.4px;color:#a8a8a8;white-space:pre;line-height:normal">88</div>
<div style="position:absolute;left:7.3px;top:828.1px;font-family:'Liberation Mono', monospace;font-size:26.4px;color:#a8a8a8;white-space:pre;line-height:normal">89</div>
<div style="position:absolute;left:168.0px;top:-9.2px;font-family:'Liberation Mono', monospace;font-size:28px;letter-spacing:-0.803px;color:#080808;white-space:pre;line-height:normal;-webkit-text-stroke-width:0.9px;">    }</div>

<div style="position:absolute;left:168.0px;top:78.8px;font-family:'Liberation Mono', monospace;font-size:28px;letter-spacing:-0.803px;color:#080808;white-space:pre;line-height:normal;-webkit-text-stroke-width:0.9px;">    </div><div style="position:absolute;left:232.0px;top:78.8px;font-family:'Liberation Mono', monospace;font-size:28px;letter-spacing:-0.803px;color:#9e880d;white-space:pre;line-height:normal;-webkit-text-stroke-width:0.9px;">@RabbitListener</div><div style="position:absolute;left:472.0px;top:78.8px;font-family:'Liberation Mono', monospace;font-size:28px;letter-spacing:-0.803px;color:#080808;white-space:pre;line-height:normal;-webkit-text-stroke-width:0.9px;">(bindings = </div><div style="position:absolute;left:664.0px;top:78.8px;font-family:'Liberation Mono', monospace;font-size:28px;letter-spacing:-0.803px;color:#9e880d;white-space:pre;line-height:normal;-webkit-text-stroke-width:0.9px;">@QueueBinding</div><div style="position:absolute;left:872.0px;top:78.8px;font-family:'Liberation Mono', monospace;font-size:28px;letter-spacing:-0.803px;color:#080808;white-space:pre;line-height:normal;-webkit-text-stroke-width:0.9px;">(</div>
<div style="position:absolute;left:168.0px;top:122.8px;font-family:'Liberation Mono', monospace;font-size:28px;letter-spacing:-0.803px;color:#080808;white-space:pre;line-height:normal;-webkit-text-stroke-width:0.9px;">            value = </div><div style="position:absolute;left:488.0px;top:122.8px;font-family:'Liberation Mono', monospace;font-size:28px;letter-spacing:-0.803px;color:#9e880d;white-space:pre;line-height:normal;-webkit-text-stroke-width:0.9px;">@Queue</div><div style="position:absolute;left:584.0px;top:122.8px;font-family:'Liberation Mono', monospace;font-size:28px;letter-spacing:-0.803px;color:#080808;white-space:pre;line-height:normal;-webkit-text-stroke-width:0.9px;">(name = </div><div style="position:absolute;left:712.0px;top:122.8px;font-family:'Liberation Mono', monospace;font-size:28px;letter-spacing:-0.803px;color:#067d17;white-space:pre;line-height:normal;-webkit-text-stroke-width:0.9px;">&quot;topic.queue1&quot;</div><div style="position:absolute;left:936.0px;top:122.8px;font-family:'Liberation Mono', monospace;font-size:28px;letter-spacing:-0.803px;color:#080808;white-space:pre;line-height:normal;-webkit-text-stroke-width:0.9px;">),</div>
<div style="position:absolute;left:168.0px;top:166.8px;font-family:'Liberation Mono', monospace;font-size:28px;letter-spacing:-0.803px;color:#080808;white-space:pre;line-height:normal;-webkit-text-stroke-width:0.9px;">            exchange = </div><div style="position:absolute;left:536.0px;top:166.8px;font-family:'Liberation Mono', monospace;font-size:28px;letter-spacing:-0.803px;color:#9e880d;white-space:pre;line-height:normal;-webkit-text-stroke-width:0.9px;">@Exchange</div><div style="position:absolute;left:680.0px;top:166.8px;font-family:'Liberation Mono', monospace;font-size:28px;letter-spacing:-0.803px;color:#080808;white-space:pre;line-height:normal;-webkit-text-stroke-width:0.9px;">(name = </div><div style="position:absolute;left:808.0px;top:166.8px;font-family:'Liberation Mono', monospace;font-size:28px;letter-spacing:-0.803px;color:#067d17;white-space:pre;line-height:normal;-webkit-text-stroke-width:0.9px;">&quot;itcast.topic&quot;</div><div style="position:absolute;left:1032.0px;top:166.8px;font-family:'Liberation Mono', monospace;font-size:28px;letter-spacing:-0.803px;color:#080808;white-space:pre;line-height:normal;-webkit-text-stroke-width:0.9px;">,type = ExchangeTypes.</div><div style="position:absolute;left:1384.0px;top:166.8px;font-family:'Liberation Mono', monospace;font-size:28px;letter-spacing:-0.803px;color:#871094;white-space:pre;line-height:normal;-webkit-text-stroke-width:0.9px;font-style:italic;">TOPIC</div><div style="position:absolute;left:1464.0px;top:166.8px;font-family:'Liberation Mono', monospace;font-size:28px;letter-spacing:-0.803px;color:#080808;white-space:pre;line-height:normal;-webkit-text-stroke-width:0.9px;">),</div>
<div style="position:absolute;left:168.0px;top:210.8px;font-family:'Liberation Mono', monospace;font-size:28px;letter-spacing:-0.803px;color:#080808;white-space:pre;line-height:normal;-webkit-text-stroke-width:0.9px;">            key = </div><div style="position:absolute;left:456.0px;top:210.8px;font-family:'Liberation Mono', monospace;font-size:28px;letter-spacing:-0.803px;color:#067d17;white-space:pre;line-height:normal;-webkit-text-stroke-width:0.9px;">&quot;china.#&quot;</div>
<div style="position:absolute;left:168.0px;top:254.8px;font-family:'Liberation Mono', monospace;font-size:28px;letter-spacing:-0.803px;color:#080808;white-space:pre;line-height:normal;-webkit-text-stroke-width:0.9px;">    ))</div>
<div style="position:absolute;left:168.0px;top:298.8px;font-family:'Liberation Mono', monospace;font-size:28px;letter-spacing:-0.803px;color:#080808;white-space:pre;line-height:normal;-webkit-text-stroke-width:0.9px;">    </div><div style="position:absolute;left:232.0px;top:298.8px;font-family:'Liberation Mono', monospace;font-size:28px;letter-spacing:-0.803px;color:#0033b3;white-space:pre;line-height:normal;-webkit-text-stroke-width:0.9px;">public void </div><div style="position:absolute;left:424.0px;top:298.8px;font-family:'Liberation Mono', monospace;font-size:28px;letter-spacing:-0.803px;color:#00627a;white-space:pre;line-height:normal;-webkit-text-stroke-width:0.9px;">listenTopicQueue1</div><div style="position:absolute;left:696.0px;top:298.8px;font-family:'Liberation Mono', monospace;font-size:28px;letter-spacing:-0.803px;color:#080808;white-space:pre;line-height:normal;-webkit-text-stroke-width:0.9px;">(String msg) {</div>
<div style="position:absolute;left:168.0px;top:342.8px;font-family:'Liberation Mono', monospace;font-size:28px;letter-spacing:-0.803px;color:#080808;white-space:pre;line-height:normal;-webkit-text-stroke-width:0.9px;">        System.</div><div style="position:absolute;left:408.0px;top:342.8px;font-family:'Liberation Mono', monospace;font-size:28px;letter-spacing:-0.803px;color:#871094;white-space:pre;line-height:normal;-webkit-text-stroke-width:0.9px;font-style:italic;">out</div><div style="position:absolute;left:456.0px;top:342.8px;font-family:'Liberation Mono', monospace;font-size:28px;letter-spacing:-0.803px;color:#080808;white-space:pre;line-height:normal;-webkit-text-stroke-width:0.9px;">.println(</div><div style="position:absolute;left:600.0px;top:342.8px;font-family:'Liberation Mono', monospace;font-size:28px;letter-spacing:-0.803px;color:#067d17;white-space:pre;line-height:normal;-webkit-text-stroke-width:0.9px;">&quot;</div><svg style="position:absolute;left:616.5px;top:344.0px" width="24.5" height="24.5" viewBox="0 0 26 26"><path d="M3 5 L6 8 M2 11 L5 13 M2 23 L6 15 M15 1 V7 M10 3 L12 7 M21 3 L18 7 M10 9 V24 M10 9 H21 V24 L18 23 M10 14 H21 M10 19 H21" stroke="#067d17" stroke-width="1.7" fill="none" stroke-linecap="round"/></svg><svg style="position:absolute;left:642.5px;top:344.0px" width="24.5" height="24.5" viewBox="0 0 26 26"><path d="M6 3 H20 V8 H6 V12 H21 L20 14 M10 1 Q10 14 5 17 M15 1 V17 M7 15 H19 V22 M7 15 V22 M13 17 V21 L7 25 M14 22 L20 25" stroke="#067d17" stroke-width="1.7" fill="none" stroke-linecap="round"/></svg><svg style="position:absolute;left:668.5px;top:344.0px" width="24.5" height="24.5" viewBox="0 0 26 26"><path d="M6 5 H19 M12 1 V9 M2 9 H24 M21 3 L6 15 M8 14 H18 V24 H8 Z M8 19 H18" stroke="#067d17" stroke-width="1.7" fill="none" stroke-linecap="round"/></svg><svg style="position:absolute;left:694.5px;top:344.0px" width="24.5" height="24.5" viewBox="0 0 26 26"><path d="M2 8 H9 M6 2 V23 L4 21 M2 17 L9 13 M16 1 V4 M11 5 H22 M13 7 L14 10 M20 7 L19 10 M11 11 H24 M11 17 H24 M17 12 L12 23 M13 19 L23 25 M21 15 L13 25" stroke="#067d17" stroke-width="1.7" fill="none" stroke-linecap="round"/></svg><svg style="position:absolute;left:720.5px;top:344.0px" width="24.5" height="24.5" viewBox="0 0 26 26"><path d="M4 5 V18 L10 15 M9 2 V24 M16 2 L13 9 M14 7 H23 M21 7 Q19 18 12 24 M14 13 L24 24" stroke="#067d17" stroke-width="1.7" fill="none" stroke-linecap="round"/></svg><svg style="position:absolute;left:746.5px;top:344.0px" width="24.5" height="24.5" viewBox="0 0 26 26"><path d="M2 3 H15 M9 3 L4 10 H14 M12 7 L14 10 M8 10 V22 M3 16 H14 M2 22 H15 M18 5 V18 M23 2 V24 L20 22" stroke="#067d17" stroke-width="1.7" fill="none" stroke-linecap="round"/></svg><div style="position:absolute;left:772.0px;top:342.8px;font-family:'Liberation Mono', monospace;font-size:28px;letter-spacing:-0.803px;color:#067d17;white-space:pre;line-height:normal;-webkit-text-stroke-width:0.9px;">topic.queue1</div><svg style="position:absolute;left:964.5px;top:344.0px" width="24.5" height="24.5" viewBox="0 0 26 26"><path d="M6 1 L4 5 M2 6 H10 V23 H2 Z M2 14 H10 M15 1 L12 9 M13 6 H23 V21 Q23 24 19 23 M15 12 L18 16" stroke="#067d17" stroke-width="1.7" fill="none" stroke-linecap="round"/></svg><svg style="position:absolute;left:990.5px;top:344.0px" width="24.5" height="24.5" viewBox="0 0 26 26"><path d="M3 5 L6 8 M2 11 L5 13 M2 23 L6 15 M15 1 V7 M10 3 L12 7 M21 3 L18 7 M10 9 V24 M10 9 H21 V24 L18 23 M10 14 H21 M10 19 H21" stroke="#067d17" stroke-width="1.7" fill="none" stroke-linecap="round"/></svg><svg style="position:absolute;left:1016.5px;top:344.0px" width="24.5" height="24.5" viewBox="0 0 26 26"><path d="M12 1 L10 4 M6 4 H19 V16 H6 Z M6 8 H19 M6 12 H19 M4 19 L2 23 M8 17 Q8 24 18 24 H20 M12 18 L14 20 M21 17 L24 22" stroke="#067d17" stroke-width="1.7" fill="none" stroke-linecap="round"/></svg><svg style="position:absolute;left:1046.0px;top:354.0px" width="6" height="14"><circle cx="3" cy="3" r="2.3" fill="#067d17"/><circle cx="3" cy="11" r="2.3" fill="#067d17"/></svg><svg style="position:absolute;left:1080.7px;top:346.0px" width="10" height="22"><path d="M0 0 H9.3 Q2.5 11 9.3 22 H0 Z" fill="#067d17"/></svg><div style="position:absolute;left:1094.0px;top:342.8px;font-family:'Liberation Mono', monospace;font-size:28px;letter-spacing:-0.803px;color:#067d17;white-space:pre;line-height:normal;-webkit-text-stroke-width:0.9px;">&quot;</div><div style="position:absolute;left:1110.0px;top:342.8px;font-family:'Liberation Mono', monospace;font-size:28px;letter-spacing:-0.803px;color:#080808;white-space:pre;line-height:normal;-webkit-text-stroke-width:0.9px;"> + msg + </div><div style="position:absolute;left:1254.0px;top:342.8px;font-family:'Liberation Mono', monospace;font-size:28px;letter-spacing:-0.803px;color:#067d17;white-space:pre;line-height:normal;-webkit-text-stroke-width:0.9px;">&quot;</div><svg style="position:absolute;left:1273.7px;top:346.0px" width="10" height="22"><path d="M9.3 0 H0 Q6.8 11 0 22 H9.3 Z" fill="#067d17"/></svg><div style="position:absolute;left:1296.0px;top:342.8px;font-family:'Liberation Mono', monospace;font-size:28px;letter-spacing:-0.803px;color:#067d17;white-space:pre;line-height:normal;-webkit-text-stroke-width:0.9px;">&quot;</div><div style="position:absolute;left:1312.0px;top:342.8px;font-family:'Liberation Mono', monospace;font-size:28px;letter-spacing:-0.803px;color:#080808;white-space:pre;line-height:normal;-webkit-text-stroke-width:0.9px;">);</div>
<div style="position:absolute;left:168.0px;top:386.8px;font-family:'Liberation Mono', monospace;font-size:28px;letter-spacing:-0.803px;color:#080808;white-space:pre;line-height:normal;-webkit-text-stroke-width:0.9px;">    }</div>

<div style="position:absolute;left:168.0px;top:474.8px;font-family:'Liberation Mono', monospace;font-size:28px;letter-spacing:-0.803px;color:#080808;white-space:pre;line-height:normal;-webkit-text-stroke-width:0.9px;">    </div><div style="position:absolute;left:232.0px;top:474.8px;font-family:'Liberation Mono', monospace;font-size:28px;letter-spacing:-0.803px;color:#9e880d;white-space:pre;line-height:normal;-webkit-text-stroke-width:0.9px;">@RabbitListener</div><div style="position:absolute;left:472.0px;top:474.8px;font-family:'Liberation Mono', monospace;font-size:28px;letter-spacing:-0.803px;color:#080808;white-space:pre;line-height:normal;-webkit-text-stroke-width:0.9px;">(bindings = </div><div style="position:absolute;left:664.0px;top:474.8px;font-family:'Liberation Mono', monospace;font-size:28px;letter-spacing:-0.803px;color:#9e880d;white-space:pre;line-height:normal;-webkit-text-stroke-width:0.9px;">@QueueBinding</div><div style="position:absolute;left:872.0px;top:474.8px;font-family:'Liberation Mono', monospace;font-size:28px;letter-spacing:-0.803px;color:#080808;white-space:pre;line-height:normal;-webkit-text-stroke-width:0.9px;">(</div>
<div style="position:absolute;left:168.0px;top:518.8px;font-family:'Liberation Mono', monospace;font-size:28px;letter-spacing:-0.803px;color:#080808;white-space:pre;line-height:normal;-webkit-text-stroke-width:0.9px;">            value = </div><div style="position:absolute;left:488.0px;top:518.8px;font-family:'Liberation Mono', monospace;font-size:28px;letter-spacing:-0.803px;color:#9e880d;white-space:pre;line-height:normal;-webkit-text-stroke-width:0.9px;">@Queue</div><div style="position:absolute;left:584.0px;top:518.8px;font-family:'Liberation Mono', monospace;font-size:28px;letter-spacing:-0.803px;color:#080808;white-space:pre;line-height:normal;-webkit-text-stroke-width:0.9px;">(name = </div><div style="position:absolute;left:712.0px;top:518.8px;font-family:'Liberation Mono', monospace;font-size:28px;letter-spacing:-0.803px;color:#067d17;white-space:pre;line-height:normal;-webkit-text-stroke-width:0.9px;">&quot;topic.queue2&quot;</div><div style="position:absolute;left:936.0px;top:518.8px;font-family:'Liberation Mono', monospace;font-size:28px;letter-spacing:-0.803px;color:#080808;white-space:pre;line-height:normal;-webkit-text-stroke-width:0.9px;">),</div>
<div style="position:absolute;left:168.0px;top:562.8px;font-family:'Liberation Mono', monospace;font-size:28px;letter-spacing:-0.803px;color:#080808;white-space:pre;line-height:normal;-webkit-text-stroke-width:0.9px;">            exchange = </div><div style="position:absolute;left:536.0px;top:562.8px;font-family:'Liberation Mono', monospace;font-size:28px;letter-spacing:-0.803px;color:#9e880d;white-space:pre;line-height:normal;-webkit-text-stroke-width:0.9px;">@Exchange</div><div style="position:absolute;left:680.0px;top:562.8px;font-family:'Liberation Mono', monospace;font-size:28px;letter-spacing:-0.803px;color:#080808;white-space:pre;line-height:normal;-webkit-text-stroke-width:0.9px;">(name = </div><div style="position:absolute;left:808.0px;top:562.8px;font-family:'Liberation Mono', monospace;font-size:28px;letter-spacing:-0.803px;color:#067d17;white-space:pre;line-height:normal;-webkit-text-stroke-width:0.9px;">&quot;itcast.topic&quot;</div><div style="position:absolute;left:1032.0px;top:562.8px;font-family:'Liberation Mono', monospace;font-size:28px;letter-spacing:-0.803px;color:#080808;white-space:pre;line-height:normal;-webkit-text-stroke-width:0.9px;">,type = ExchangeTypes.</div><div style="position:absolute;left:1384.0px;top:562.8px;font-family:'Liberation Mono', monospace;font-size:28px;letter-spacing:-0.803px;color:#871094;white-space:pre;line-height:normal;-webkit-text-stroke-width:0.9px;font-style:italic;">TOPIC</div><div style="position:absolute;left:1464.0px;top:562.8px;font-family:'Liberation Mono', monospace;font-size:28px;letter-spacing:-0.803px;color:#080808;white-space:pre;line-height:normal;-webkit-text-stroke-width:0.9px;">),</div>
<div style="position:absolute;left:168.0px;top:606.8px;font-family:'Liberation Mono', monospace;font-size:28px;letter-spacing:-0.803px;color:#080808;white-space:pre;line-height:normal;-webkit-text-stroke-width:0.9px;">            key = </div><div style="position:absolute;left:456.0px;top:606.8px;font-family:'Liberation Mono', monospace;font-size:28px;letter-spacing:-0.803px;color:#067d17;white-space:pre;line-height:normal;-webkit-text-stroke-width:0.9px;">&quot;#.news&quot;</div>
<div style="position:absolute;left:168.0px;top:650.8px;font-family:'Liberation Mono', monospace;font-size:28px;letter-spacing:-0.803px;color:#080808;white-space:pre;line-height:normal;-webkit-text-stroke-width:0.9px;">    ))</div>
<div style="position:absolute;left:168.0px;top:694.8px;font-family:'Liberation Mono', monospace;font-size:28px;letter-spacing:-0.803px;color:#080808;white-space:pre;line-height:normal;-webkit-text-stroke-width:0.9px;">    </div><div style="position:absolute;left:232.0px;top:694.8px;font-family:'Liberation Mono', monospace;font-size:28px;letter-spacing:-0.803px;color:#0033b3;white-space:pre;line-height:normal;-webkit-text-stroke-width:0.9px;">public void </div><div style="position:absolute;left:424.0px;top:694.8px;font-family:'Liberation Mono', monospace;font-size:28px;letter-spacing:-0.803px;color:#00627a;white-space:pre;line-height:normal;-webkit-text-stroke-width:0.9px;">listenTopicQueue2</div><div style="position:absolute;left:696.0px;top:694.8px;font-family:'Liberation Mono', monospace;font-size:28px;letter-spacing:-0.803px;color:#080808;white-space:pre;line-height:normal;-webkit-text-stroke-width:0.9px;">(String msg) {</div>
<div style="position:absolute;left:168.0px;top:738.8px;font-family:'Liberation Mono', monospace;font-size:28px;letter-spacing:-0.803px;color:#080808;white-space:pre;line-height:normal;-webkit-text-stroke-width:0.9px;">        System.</div><div style="position:absolute;left:408.0px;top:738.8px;font-family:'Liberation Mono', monospace;font-size:28px;letter-spacing:-0.803px;color:#871094;white-space:pre;line-height:normal;-webkit-text-stroke-width:0.9px;font-style:italic;">out</div><div style="position:absolute;left:456.0px;top:738.8px;font-family:'Liberation Mono', monospace;font-size:28px;letter-spacing:-0.803px;color:#080808;white-space:pre;line-height:normal;-webkit-text-stroke-width:0.9px;">.println(</div><div style="position:absolute;left:600.0px;top:738.8px;font-family:'Liberation Mono', monospace;font-size:28px;letter-spacing:-0.803px;color:#067d17;white-space:pre;line-height:normal;-webkit-text-stroke-width:0.9px;">&quot;</div><svg style="position:absolute;left:616.5px;top:740.0px" width="24.5" height="24.5" viewBox="0 0 26 26"><path d="M3 5 L6 8 M2 11 L5 13 M2 23 L6 15 M15 1 V7 M10 3 L12 7 M21 3 L18 7 M10 9 V24 M10 9 H21 V24 L18 23 M10 14 H21 M10 19 H21" stroke="#067d17" stroke-width="1.7" fill="none" stroke-linecap="round"/></svg><svg style="position:absolute;left:642.5px;top:740.0px" width="24.5" height="24.5" viewBox="0 0 26 26"><path d="M6 3 H20 V8 H6 V12 H21 L20 14 M10 1 Q10 14 5 17 M15 1 V17 M7 15 H19 V22 M7 15 V22 M13 17 V21 L7 25 M14 22 L20 25" stroke="#067d17" stroke-width="1.7" fill="none" stroke-linecap="round"/></svg><svg style="position:absolute;left:668.5px;top:740.0px" width="24.5" height="24.5" viewBox="0 0 26 26"><path d="M6 5 H19 M12 1 V9 M2 9 H24 M21 3 L6 15 M8 14 H18 V24 H8 Z M8 19 H18" stroke="#067d17" stroke-width="1.7" fill="none" stroke-linecap="round"/></svg><svg style="position:absolute;left:694.5px;top:740.0px" width="24.5" height="24.5" viewBox="0 0 26 26"><path d="M2 8 H9 M6 2 V23 L4 21 M2 17 L9 13 M16 1 V4 M11 5 H22 M13 7 L14 10 M20 7 L19 10 M11 11 H24 M11 17 H24 M17 12 L12 23 M13 19 L23 25 M21 15 L13 25" stroke="#067d17" stroke-width="1.7" fill="none" stroke-linecap="round"/></svg><svg style="position:absolute;left:720.5px;top:740.0px" width="24.5" height="24.5" viewBox="0 0 26 26"><path d="M4 5 V18 L10 15 M9 2 V24 M16 2 L13 9 M14 7 H23 M21 7 Q19 18 12 24 M14 13 L24 24" stroke="#067d17" stroke-width="1.7" fill="none" stroke-linecap="round"/></svg><svg style="position:absolute;left:746.5px;top:740.0px" width="24.5" height="24.5" viewBox="0 0 26 26"><path d="M2 3 H15 M9 3 L4 10 H14 M12 7 L14 10 M8 10 V22 M3 16 H14 M2 22 H15 M18 5 V18 M23 2 V24 L20 22" stroke="#067d17" stroke-width="1.7" fill="none" stroke-linecap="round"/></svg><div style="position:absolute;left:772.0px;top:738.8px;font-family:'Liberation Mono', monospace;font-size:28px;letter-spacing:-0.803px;color:#067d17;white-space:pre;line-height:normal;-webkit-text-stroke-width:0.9px;">topic.queue2</div><svg style="position:absolute;left:964.5px;top:740.0px" width="24.5" height="24.5" viewBox="0 0 26 26"><path d="M6 1 L4 5 M2 6 H10 V23 H2 Z M2 14 H10 M15 1 L12 9 M13 6 H23 V21 Q23 24 19 23 M15 12 L18 16" stroke="#067d17" stroke-width="1.7" fill="none" stroke-linecap="round"/></svg><svg style="position:absolute;left:990.5px;top:740.0px" width="24.5" height="24.5" viewBox="0 0 26 26"><path d="M3 5 L6 8 M2 11 L5 13 M2 23 L6 15 M15 1 V7 M10 3 L12 7 M21 3 L18 7 M10 9 V24 M10 9 H21 V24 L18 23 M10 14 H21 M10 19 H21" stroke="#067d17" stroke-width="1.7" fill="none" stroke-linecap="round"/></svg><svg style="position:absolute;left:1016.5px;top:740.0px" width="24.5" height="24.5" viewBox="0 0 26 26"><path d="M12 1 L10 4 M6 4 H19 V16 H6 Z M6 8 H19 M6 12 H19 M4 19 L2 23 M8 17 Q8 24 18 24 H20 M12 18 L14 20 M21 17 L24 22" stroke="#067d17" stroke-width="1.7" fill="none" stroke-linecap="round"/></svg><svg style="position:absolute;left:1046.0px;top:750.0px" width="6" height="14"><circle cx="3" cy="3" r="2.3" fill="#067d17"/><circle cx="3" cy="11" r="2.3" fill="#067d17"/></svg><svg style="position:absolute;left:1080.7px;top:742.0px" width="10" height="22"><path d="M0 0 H9.3 Q2.5 11 9.3 22 H0 Z" fill="#067d17"/></svg><div style="position:absolute;left:1094.0px;top:738.8px;font-family:'Liberation Mono', monospace;font-size:28px;letter-spacing:-0.803px;color:#067d17;white-space:pre;line-height:normal;-webkit-text-stroke-width:0.9px;">&quot;</div><div style="position:absolute;left:1110.0px;top:738.8px;font-family:'Liberation Mono', monospace;font-size:28px;letter-spacing:-0.803px;color:#080808;white-space:pre;line-height:normal;-webkit-text-stroke-width:0.9px;"> + msg + </div><div style="position:absolute;left:1254.0px;top:738.8px;font-family:'Liberation Mono', monospace;font-size:28px;letter-spacing:-0.803px;color:#067d17;white-space:pre;line-height:normal;-webkit-text-stroke-width:0.9px;">&quot;</div><svg style="position:absolute;left:1273.7px;top:742.0px" width="10" height="22"><path d="M9.3 0 H0 Q6.8 11 0 22 H9.3 Z" fill="#067d17"/></svg><div style="position:absolute;left:1296.0px;top:738.8px;font-family:'Liberation Mono', monospace;font-size:28px;letter-spacing:-0.803px;color:#067d17;white-space:pre;line-height:normal;-webkit-text-stroke-width:0.9px;">&quot;</div><div style="position:absolute;left:1312.0px;top:738.8px;font-family:'Liberation Mono', monospace;font-size:28px;letter-spacing:-0.803px;color:#080808;white-space:pre;line-height:normal;-webkit-text-stroke-width:0.9px;">);</div>
<div style="position:absolute;left:168.0px;top:782.8px;font-family:'Liberation Mono', monospace;font-size:28px;letter-spacing:-0.803px;color:#080808;white-space:pre;line-height:normal;-webkit-text-stroke-width:0.9px;">    }</div>

<svg style="position:absolute;left:147px;top:-9.0px" width="18" height="25"><path d="M1 23.5 H17 V9 L9 1 L1 9 Z" fill="#fff" stroke="#d0d0d0" stroke-width="2"/><path d="M5 15 H14" stroke="#c8c8c8" stroke-width="2"/></svg>
<svg style="position:absolute;left:147px;top:84.0px" width="18" height="25"><path d="M1 1 H17 V16 L9 23.5 L1 16 Z" fill="#fff" stroke="#d0d0d0" stroke-width="2"/><path d="M5 9 H14" stroke="#c8c8c8" stroke-width="2"/></svg>
<svg style="position:absolute;left:147px;top:255.0px" width="18" height="25"><path d="M1 23.5 H17 V9 L9 1 L1 9 Z" fill="#fff" stroke="#d0d0d0" stroke-width="2"/><path d="M5 15 H14" stroke="#c8c8c8" stroke-width="2"/></svg>
<svg style="position:absolute;left:147px;top:304.0px" width="18" height="25"><path d="M1 1 H17 V16 L9 23.5 L1 16 Z" fill="#fff" stroke="#d0d0d0" stroke-width="2"/><path d="M5 9 H14" stroke="#c8c8c8" stroke-width="2"/></svg>
<svg style="position:absolute;left:147px;top:348.0px" width="18" height="25"><path d="M1 1 H17 V16 L9 23.5 L1 16 Z" fill="#fff" stroke="#d0d0d0" stroke-width="2"/><path d="M5 9 H14" stroke="#c8c8c8" stroke-width="2"/></svg>
<svg style="position:absolute;left:147px;top:387.0px" width="18" height="25"><path d="M1 23.5 H17 V9 L9 1 L1 9 Z" fill="#fff" stroke="#d0d0d0" stroke-width="2"/><path d="M5 15 H14" stroke="#c8c8c8" stroke-width="2"/></svg>
<svg style="position:absolute;left:147px;top:480.0px" width="18" height="25"><path d="M1 1 H17 V16 L9 23.5 L1 16 Z" fill="#fff" stroke="#d0d0d0" stroke-width="2"/><path d="M5 9 H14" stroke="#c8c8c8" stroke-width="2"/></svg>
<svg style="position:absolute;left:147px;top:651.0px" width="18" height="25"><path d="M1 23.5 H17 V9 L9 1 L1 9 Z" fill="#fff" stroke="#d0d0d0" stroke-width="2"/><path d="M5 15 H14" stroke="#c8c8c8" stroke-width="2"/></svg>
<svg style="position:absolute;left:147px;top:700.0px" width="18" height="25"><path d="M1 1 H17 V16 L9 23.5 L1 16 Z" fill="#fff" stroke="#d0d0d0" stroke-width="2"/><path d="M5 9 H14" stroke="#c8c8c8" stroke-width="2"/></svg>
<svg style="position:absolute;left:147px;top:744.0px" width="18" height="25"><path d="M1 1 H17 V16 L9 23.5 L1 16 Z" fill="#fff" stroke="#d0d0d0" stroke-width="2"/><path d="M5 9 H14" stroke="#c8c8c8" stroke-width="2"/></svg>
<svg style="position:absolute;left:147px;top:783.0px" width="18" height="25"><path d="M1 23.5 H17 V9 L9 1 L1 9 Z" fill="#fff" stroke="#d0d0d0" stroke-width="2"/><path d="M5 15 H14" stroke="#c8c8c8" stroke-width="2"/></svg>
<svg style="position:absolute;left:54px;top:299px" width="26" height="26"><path d="M6 2 H18 M6 6 H18" stroke="#6e6e6e" stroke-width="2"/><rect x="5" y="9" width="14" height="7" fill="#6e6e6e"/><path d="M1.5 14 V20 H22.5 V14" fill="none" stroke="#6e6e6e" stroke-width="2"/></svg>
<svg style="position:absolute;left:54px;top:695px" width="26" height="26"><path d="M6 2 H18 M6 6 H18" stroke="#6e6e6e" stroke-width="2"/><rect x="5" y="9" width="14" height="7" fill="#6e6e6e"/><path d="M1.5 14 V20 H22.5 V14" fill="none" stroke="#6e6e6e" stroke-width="2"/></svg>
<div style="position:absolute;left:228px;top:114px;width:2px;height:132px;background:#e4e4e4"></div>
<div style="position:absolute;left:228px;top:334px;width:2px;height:44px;background:#e4e4e4"></div>
<div style="position:absolute;left:228px;top:510px;width:2px;height:132px;background:#e4e4e4"></div>
<div style="position:absolute;left:228px;top:730px;width:2px;height:44px;background:#e4e4e4"></div>
<div style="position:absolute;left:728px;top:150px;width:192px;height:2px;background:#7a7a7a"></div>
<div style="position:absolute;left:728px;top:546px;width:192px;height:2px;background:#7a7a7a"></div>
<svg style="position:absolute;left:824px;top:195px" width="96" height="6"><path d="M0 4 L3.0 0 L6.0 4 L9.0 0 L12.0 4 L15.0 0 L18.0 4 L21.0 0 L24.0 4 L27.0 0 L30.0 4 L33.0 0 L36.0 4 L39.0 0 L42.0 4 L45.0 0 L48.0 4 L51.0 0 L54.0 4 L57.0 0 L60.0 4 L63.0 0 L66.0 4 L69.0 0 L72.0 4 L75.0 0 L78.0 4 L81.0 0 L84.0 4 L87.0 0 L90.0 4 L93.0 0 L96.0 4" fill="none" stroke="#a6d3a0" stroke-width="1.3"/></svg>
<div style="position:absolute;left:920px;top:193px;width:96px;height:2px;background:#7a7a7a"></div>
<svg style="position:absolute;left:824px;top:591px" width="96" height="6"><path d="M0 4 L3.0 0 L6.0 4 L9.0 0 L12.0 4 L15.0 0 L18.0 4 L21.0 0 L24.0 4 L27.0 0 L30.0 4 L33.0 0 L36.0 4 L39.0 0 L42.0 4 L45.0 0 L48.0 4 L51.0 0 L54.0 4 L57.0 0 L60.0 4 L63.0 0 L66.0 4 L69.0 0 L72.0 4 L75.0 0 L78.0 4 L81.0 0 L84.0 4 L87.0 0 L90.0 4 L93.0 0 L96.0 4" fill="none" stroke="#a6d3a0" stroke-width="1.3"/></svg>
<div style="position:absolute;left:920px;top:589px;width:96px;height:2px;background:#7a7a7a"></div>
</div>
<svg style="position:absolute;left:2900px;top:172px;overflow:visible;" width="24" height="22" viewBox="0 0 24 22"><path d="M12 1 L23.5 21 H0.5 Z" fill="#eac200"/><rect x="10.7" y="7" width="2.6" height="7.5" fill="#fff"/><rect x="10.7" y="16.3" width="2.6" height="2.6" fill="#fff"/></svg>
<div style="position:absolute;left:2930px;top:170.00px;font-family:'Liberation Sans', sans-serif;font-size:25px;color:#5e6b7d;font-weight:400;white-space:pre;line-height:normal;">2</div>
<svg style="position:absolute;left:2960px;top:172px;overflow:visible;" width="24" height="22" viewBox="0 0 24 22"><path d="M12 1 L23.5 21 H0.5 Z" fill="#d9cca8"/><rect x="10.7" y="7" width="2.6" height="7.5" fill="#fff"/><rect x="10.7" y="16.3" width="2.6" height="2.6" fill="#fff"/></svg>
<div style="position:absolute;left:2990px;top:170.00px;font-family:'Liberation Sans', sans-serif;font-size:25px;color:#5e6b7d;font-weight:400;white-space:pre;line-height:normal;">1</div>
<svg style="position:absolute;left:3020px;top:172px;overflow:visible;" width="24" height="26" viewBox="0 0 24 26"><path d="M2 12 L9 19 L22 4" fill="none" stroke="#59a869" stroke-width="4"/><path d="M1 24 L5 20 L9 24 L13 20 L17 24 L21 20" fill="none" stroke="#59a869" stroke-width="1.6"/></svg>
<div style="position:absolute;left:3049px;top:170.00px;font-family:'Liberation Sans', sans-serif;font-size:25px;color:#5e6b7d;font-weight:400;white-space:pre;line-height:normal;">4</div>
<svg style="position:absolute;left:3086px;top:176px;overflow:visible;" width="20" height="12" viewBox="0 0 20 12"><path d="M2 10 L10 2 L18 10" fill="none" stroke="#6e6e6e" stroke-width="2.2"/></svg>
<svg style="position:absolute;left:3127px;top:176px;overflow:visible;" width="20" height="12" viewBox="0 0 20 12"><path d="M2 2 L10 10 L18 2" fill="none" stroke="#6e6e6e" stroke-width="2.2"/></svg>
<div style="position:absolute;left:3132px;top:389px;width:28px;height:3px;background:#d9cfaa;"></div>
<div style="position:absolute;left:3140px;top:783px;width:20px;height:158px;background:#dedede;"></div>
<svg style="position:absolute;left:2800px;top:270px;overflow:visible;" width="280" height="230" viewBox="0 0 280 230">
<g stroke="#6e3c3c" stroke-width="3.2" fill="none" stroke-linecap="round">
<path d="M100 22 H126 M113 13 V20 M105 25 L108 31 M121 25 L118 31 M98 36 H128 M113 36 V50 M102 43 H124"/>
<path d="M139 20 H176 M150 13 V26 M166 13 V26 M143 31 H173 M158 31 V38 M146 38 H170 M150 38 q-3 9 8 9 q11 0 10 -9"/>
<path d="M184 33 q0 -8 6 -8 q6 0 6 8 q0 7 -6 7 q-6 0 -6 -7 M202 30 H212 M207 22 V48 M200 40 L212 36 M220 23 L222 27 M215 31 H231 M218 36 L221 45 M229 34 L226 45 M213 47 H233"/>
</g>
<path d="M47.0 95.5 L46.0 97.7 L44.2 99.4 L43.7 101.4 L44.1 103.9 L43.4 106.1 L41.0 107.0 L38.7 107.5 L37.3 109.1 L36.1 111.3 L34.0 112.2 L31.6 111.3 L29.5 110.5 L27.4 111.3 L25.0 112.2 L22.9 111.3 L21.7 109.1 L20.3 107.5 L18.0 107.0 L15.6 106.1 L14.9 103.9 L15.3 101.4 L14.8 99.4 L13.0 97.7 L12.0 95.5 L13.0 93.3 L14.8 91.6 L15.3 89.6 L14.9 87.1 L15.6 84.9 L18.0 84.0 L20.3 83.5 L21.7 81.9 L22.9 79.7 L25.0 78.8 L27.4 79.7 L29.5 80.5 L31.6 79.7 L34.0 78.8 L36.1 79.7 L37.3 81.9 L38.7 83.5 L41.0 84.0 L43.4 84.9 L44.1 87.1 L43.7 89.6 L44.2 91.6 L46.0 93.3Z" fill="#6b3a2a"/><text x="21" y="103" font-family="Liberation Serif" font-weight="700" font-size="22" fill="#fff">E</text>
<path d="M47.0 135.0 L46.0 137.2 L44.2 138.9 L43.7 140.9 L44.1 143.4 L43.4 145.6 L41.0 146.5 L38.7 147.0 L37.3 148.6 L36.1 150.8 L34.0 151.7 L31.6 150.8 L29.5 150.1 L27.4 150.8 L25.0 151.7 L22.9 150.8 L21.7 148.6 L20.3 147.0 L18.0 146.5 L15.6 145.6 L14.9 143.4 L15.3 140.9 L14.8 138.9 L13.0 137.2 L12.0 135.0 L13.0 132.8 L14.8 131.1 L15.3 129.1 L14.9 126.6 L15.6 124.4 L18.0 123.5 L20.3 123.0 L21.7 121.4 L22.9 119.2 L25.0 118.3 L27.4 119.2 L29.5 120.0 L31.6 119.2 L34.0 118.3 L36.1 119.2 L37.3 121.4 L38.7 123.0 L41.0 123.5 L43.4 124.4 L44.1 126.6 L43.7 129.1 L44.2 131.1 L46.0 132.8Z" fill="#6b3a2a"/><circle cx="29.5" cy="135" r="8" fill="#fff"/>
<path d="M47.0 176.0 L46.0 178.2 L44.2 179.9 L43.7 181.9 L44.1 184.4 L43.4 186.6 L41.0 187.5 L38.7 188.0 L37.3 189.6 L36.1 191.8 L34.0 192.7 L31.6 191.8 L29.5 191.1 L27.4 191.8 L25.0 192.7 L22.9 191.8 L21.7 189.6 L20.3 188.0 L18.0 187.5 L15.6 186.6 L14.9 184.4 L15.3 181.9 L14.8 179.9 L13.0 178.2 L12.0 176.0 L13.0 173.8 L14.8 172.1 L15.3 170.1 L14.9 167.6 L15.6 165.4 L18.0 164.5 L20.3 164.0 L21.7 162.4 L22.9 160.2 L25.0 159.3 L27.4 160.2 L29.5 160.9 L31.6 160.2 L34.0 159.3 L36.1 160.2 L37.3 162.4 L38.7 164.0 L41.0 164.5 L43.4 165.4 L44.1 167.6 L43.7 170.1 L44.2 172.1 L46.0 173.8Z" fill="#6b3a2a"/><path d="M21 170 l5-4 h7 l5 4 l-3 3 v9 h-11 v-9 z" fill="#fff"/>
<g stroke="#7a4040" stroke-width="2.6">
<circle cx="193" cy="69" r="15" fill="#fff"/>
<ellipse cx="213" cy="122" rx="45" ry="48" fill="#fff"/>
<circle cx="252" cy="102" r="14" fill="#fff"/>
<path d="M172 168 h44 l2 36 h-48 z" fill="#ffd900"/>
<path d="M168 204 q25 12 52 0 l0 8 q-26 10 -52 0 z" fill="#fff" stroke-width="1.8"/>
<circle cx="81" cy="76" r="16" fill="#fde3df"/>
<circle cx="151" cy="68" r="16" fill="#fde3df"/>
<path d="M82 160 q-6 30 6 55 q20 6 40 0 q10 3 30 0 q10 -25 8 -50 z" fill="#fde3df"/>
<circle cx="82" cy="175" r="8" fill="#fff"/>
<ellipse cx="122" cy="117" rx="67" ry="48" fill="#fde3df"/>
</g>
<ellipse cx="238" cy="110" rx="6" ry="4.5" fill="#ffd900" stroke="#c8a000" stroke-width="1"/><ellipse cx="249" cy="118" rx="6" ry="4.5" fill="#ffd900" stroke="#c8a000" stroke-width="1"/>
<path d="M60 106 q18 -10 36 -4 q-6 10 -20 10 q-12 0 -16 -6 z" fill="#fff" stroke="#7a4040" stroke-width="2.4"/>
<path d="M123 99 q24 -8 48 -3 q-8 14 -26 14 q-16 0 -22 -11 z" fill="#fff" stroke="#7a4040" stroke-width="2.4"/>
<path d="M78 102 q6 -4 12 -2 l-4 5 z M142 97 q8 -3 14 0 l-6 5 z" fill="#5a2a2a"/>
<ellipse cx="106" cy="100" rx="4" ry="2.5" fill="#5a2a2a"/>
<ellipse cx="69" cy="128" rx="7.5" ry="5" fill="#f9b8b8"/><ellipse cx="160" cy="122" rx="7.5" ry="5" fill="#f9b8b8"/>
<path d="M101 118 q3 6 9 2 q6 4 9 -2" stroke="#7a4040" stroke-width="2" fill="none"/><path d="M106 121 q-1 8 4 9 q4 -1 3 -9 z" fill="#f3a0a8" stroke="#7a4040" stroke-width="1.4"/>
<path d="M184 128 q6 -3 12 0" stroke="#7a4040" stroke-width="3.5" fill="none"/>
<path d="M212 129 q12 -6 22 2 q4 8 10 8" stroke="#7a4040" stroke-width="3" fill="none"/>
<ellipse cx="222" cy="153" rx="6" ry="4.5" fill="#f9c0c0"/>
</svg>
<div style="position:absolute;left:44px;top:1009px;width:3116px;height:2px;background:#c9c9c9;"></div>
<div style="position:absolute;left:44px;top:1011px;width:3116px;height:52px;background:#e3e5ee;"></div>
<div style="position:absolute;left:44px;top:1063px;width:3116px;height:2px;background:#cfcfcf;"></div>
<div style="position:absolute;left:56px;top:1022.54px;font-family:'Liberation Sans', sans-serif;font-size:25.5px;color:#000;font-weight:400;white-space:pre;line-height:normal;">Run:</div>
<svg style="position:absolute;left:148px;top:1022px;overflow:visible;" width="40" height="36" viewBox="0 0 40 36"><path d="M0.5 21 Q0 9 13 8 Q23 7 28 3.5 Q28.5 12 27.5 16.5 H12.5 L7 26.5 Q2 28 0.5 21 Z" fill="#8cc97a"/><path d="M6 30.5 Q9 28.5 14.5 28 V30.5 Z" fill="#8cc97a"/><path d="M12.5 24 L16.75 16.3 H25.25 L29.5 24 L25.25 31.7 H16.75 Z" fill="#9aa7b0" stroke="#e3e5ee" stroke-width="1.6"/><path d="M18 20.5 A4.6 4.6 0 1 0 24 20.5" fill="none" stroke="#e3e5ee" stroke-width="1.8"/><path d="M21 18.5 V23.5" stroke="#e3e5ee" stroke-width="1.8"/><circle cx="27" cy="31" r="4.5" fill="#3fc43f" stroke="#e3e5ee" stroke-width="1.2"/></svg>
<div style="position:absolute;left:186px;top:1022.54px;font-family:'Liberation Sans', sans-serif;font-size:25.5px;color:#000;font-weight:400;white-space:pre;line-height:normal;">ConsumerApplication</div>
<svg style="position:absolute;left:446px;top:1029px;overflow:visible;" width="18" height="18" viewBox="0 0 18 18"><path d="M2 2 L16 16 M16 2 L2 16" stroke="#9a9a9a" stroke-width="2"/></svg>
<div style="position:absolute;left:122px;top:1059px;width:361px;height:6px;background:#4083c9;border-radius:3px;"></div>
<svg style="position:absolute;left:510px;top:1029px;overflow:visible;" width="28" height="24" viewBox="0 0 28 24"><path d="M12 2 V22 L2 12 Z" fill="#f4a48a"/><path d="M16 2 V22 L26 12 Z" fill="#7ac36e"/></svg>
<div style="position:absolute;left:548px;top:1022.54px;font-family:'Liberation Sans', sans-serif;font-size:25.5px;color:#000;font-weight:400;white-space:pre;line-height:normal;">SpringAmqpTest.testSendDirectExchange</div>
<svg style="position:absolute;left:1036px;top:1029px;overflow:visible;" width="18" height="18" viewBox="0 0 18 18"><path d="M2 2 L16 16 M16 2 L2 16" stroke="#9a9a9a" stroke-width="2"/></svg>
<svg style="position:absolute;left:3068px;top:1023px;overflow:visible;" width="28" height="28" viewBox="0 0 28 28"><path d="M26.6 11.6 L26.6 16.4 L22.9 16.3 L21.9 18.7 L24.6 21.2 L21.2 24.6 L18.7 21.9 L16.3 22.9 L16.4 26.6 L11.6 26.6 L11.7 22.9 L9.3 21.9 L6.8 24.6 L3.4 21.2 L6.1 18.7 L5.1 16.3 L1.4 16.4 L1.4 11.6 L5.1 11.7 L6.1 9.3 L3.4 6.8 L6.8 3.4 L9.3 6.1 L11.7 5.1 L11.6 1.4 L16.4 1.4 L16.3 5.1 L18.7 6.1 L21.2 3.4 L24.6 6.8 L21.9 9.3 L22.9 11.7Z" fill="#6e6e6e"/><circle cx="14" cy="14" r="9.6" fill="#6e6e6e"/><circle cx="14" cy="14" r="4.6" fill="#e4e6ed"/></svg>
<div style="position:absolute;left:3122px;top:1035px;width:25px;height:4px;background:#6e6e6e;"></div>
<div style="position:absolute;left:44px;top:1065px;width:57px;height:742px;background:#f2f2f2;"></div>
<div style="position:absolute;left:101px;top:1065px;width:2px;height:742px;background:#d4d4d4;"></div>
<div style="position:absolute;left:103px;top:1065px;width:3057px;height:54px;background:#f2f2f2;"></div>
<div style="position:absolute;left:103px;top:1119px;width:3057px;height:2px;background:#d4d4d4;"></div>
<div style="position:absolute;left:103px;top:1121px;width:56px;height:686px;background:#f2f2f2;"></div>
<div style="position:absolute;left:159px;top:1121px;width:2px;height:686px;background:#d4d4d4;"></div>
<div style="position:absolute;left:161px;top:1121px;width:2999px;height:686px;background:#fff;"></div>
<div style="position:absolute;left:128.5px;top:1080.54px;font-family:'Liberation Sans', sans-serif;font-size:25.5px;color:#000;font-weight:400;white-space:pre;line-height:normal;transform:scaleX(0.9032);transform-origin:0 0;">Console</div>
<div style="position:absolute;left:101px;top:1115px;width:139px;height:5px;background:#4083c9;"></div>
<svg style="position:absolute;left:262px;top:1078px;overflow:visible;" width="30" height="34" viewBox="0 0 30 34"><path d="M19 6 L7 27 M19 6 L26 18 L27 27" stroke="#f4a07a" stroke-width="2.8" fill="none"/><circle cx="18" cy="7" r="5" fill="#f4a07a"/><circle cx="6" cy="27" r="5" fill="#f4a07a"/><circle cx="26" cy="27" r="5" fill="#f4a07a"/></svg>
<div style="position:absolute;left:303px;top:1080.54px;font-family:'Liberation Sans', sans-serif;font-size:25.5px;color:#000;font-weight:400;white-space:pre;line-height:normal;transform:scaleX(0.9372);transform-origin:0 0;">Actuator</div>
<svg style="position:absolute;left:58px;top:1078px;overflow:visible;" width="30" height="32" viewBox="0 0 30 32"><path d="M22 9 A10 10 0 1 0 12 25" fill="none" stroke="#59a869" stroke-width="3.4"/><path d="M16 1 L27 8 L17 14 Z" fill="#59a869"/><rect x="17" y="18" width="10" height="10" fill="#6e6e6e"/></svg>
<svg style="position:absolute;left:58px;top:1130px;overflow:visible;" width="30" height="30" viewBox="0 0 30 30"><path d="M3 26 L14 15" stroke="#6e6e6e" stroke-width="4.5"/><path d="M14 15 a8 8 0 0 1 12-11 l-6 6 l4 4 l6-6 a8 8 0 0 1 -11 12 z" fill="#6e6e6e"/></svg>
<div style="position:absolute;left:52px;top:1177px;width:40px;height:2px;background:#d0d0d0;"></div>
<div style="position:absolute;left:62px;top:1201px;width:20px;height:20px;background:#db5860;"></div>
<svg style="position:absolute;left:58px;top:1248px;overflow:visible;" width="30" height="26" viewBox="0 0 30 26"><path d="M1 6 H8 L11 1 H19 L22 6 H29 V25 H1 Z" fill="#6e6e6e"/><circle cx="15" cy="15" r="6" fill="#f2f2f2"/><circle cx="15" cy="15" r="3.2" fill="#6e6e6e"/></svg>
<svg style="position:absolute;left:58px;top:1300px;overflow:visible;" width="32" height="30" viewBox="0 0 32 30"><path d="M8 3 L12 7 M20 3 L16 7" stroke="#59a869" stroke-width="2.5"/><path d="M6 11 q0-5 8-5 q8 0 8 5 v9 q0 8-8 8 q-8 0-8-8z" fill="#59a869"/><path d="M2 12 h24 M2 19 h24" stroke="#59a869" stroke-width="2.5"/><path d="M10 15 h8" stroke="#f2f2f2" stroke-width="2.4"/><path d="M20 18 L30 28 M22 27 H30 V19" stroke="#6e6e6e" stroke-width="3.2" fill="none"/></svg>
<svg style="position:absolute;left:58px;top:1352px;overflow:visible;" width="30" height="30" viewBox="0 0 30 30"><path d="M9 1 H27 V28 H9 V21 M9 8 V1" fill="none" stroke="#6e6e6e" stroke-width="3"/><path d="M1 14.5 H16" stroke="#e05555" stroke-width="3.4"/><path d="M13 8 L20 14.5 L13 21 Z" fill="#e05555"/></svg>
<div style="position:absolute;left:52px;top:1399px;width:40px;height:2px;background:#d0d0d0;"></div>
<svg style="position:absolute;left:60px;top:1422px;overflow:visible;" width="24" height="22" viewBox="0 0 24 22"><rect x="0" y="0" width="11" height="9" fill="#6e6e6e"/><rect x="13" y="0" width="11" height="9" fill="#6e6e6e"/><rect x="0" y="11" width="24" height="10" fill="#6e6e6e"/></svg>
<div style="position:absolute;left:52px;top:1465px;width:40px;height:2px;background:#d0d0d0;"></div>
<svg style="position:absolute;left:57px;top:1478px;overflow:visible;" width="32" height="30" viewBox="0 0 32 30"><path d="M2 28 L14 16" stroke="#6e6e6e" stroke-width="3"/><path d="M10 12 L18 4 L28 14 L20 22 Z" fill="#6e6e6e"/><path d="M8 10 L22 24" stroke="#6e6e6e" stroke-width="4"/></svg>
<svg style="position:absolute;left:118px;top:1137px;overflow:visible;" width="24" height="26" viewBox="0 0 24 26"><path d="M12 25 V3 M3 12 L12 3 L21 12" fill="none" stroke="#6e6e6e" stroke-width="3"/></svg>
<svg style="position:absolute;left:118px;top:1189px;overflow:visible;" width="24" height="26" viewBox="0 0 24 26"><path d="M12 1 V23 M3 14 L12 23 L21 14" fill="none" stroke="#6e6e6e" stroke-width="3"/></svg>
<div style="position:absolute;left:108px;top:1234px;width:44px;height:43px;background:#d6d6d6;border-radius:6px;"></div>
<svg style="position:absolute;left:117px;top:1243px;overflow:visible;" width="26" height="26" viewBox="0 0 26 26"><path d="M2 3 H24 M2 10 H24 q0 8 -8 8 H9" fill="none" stroke="#6e6e6e" stroke-width="3"/><path d="M11 13 L6 18 L11 23" fill="none" stroke="#6e6e6e" stroke-width="3"/><path d="M2 18 h4" stroke="#6e6e6e" stroke-width="3"/></svg>
<div style="position:absolute;left:108px;top:1285px;width:44px;height:43px;background:#d6d6d6;border-radius:6px;"></div>
<svg style="position:absolute;left:117px;top:1292px;overflow:visible;" width="26" height="28" viewBox="0 0 26 28"><path d="M2 5 H10 M2 12 H10 M2 24 H24" stroke="#6e6e6e" stroke-width="3"/><path d="M17 2 V16 M11 11 L17 17 L23 11" fill="none" stroke="#6e6e6e" stroke-width="3"/></svg>
<svg style="position:absolute;left:116px;top:1346px;overflow:visible;" width="28" height="28" viewBox="0 0 28 28"><rect x="6" y="1" width="16" height="6" fill="#6e6e6e"/><path d="M1 9 H27 V21 H22 V15 H6 V21 H1 Z" fill="#6e6e6e"/><rect x="8" y="17" width="12" height="9" fill="none" stroke="#6e6e6e" stroke-width="2.5"/><circle cx="23" cy="12" r="1.2" fill="#fff"/></svg>
<svg style="position:absolute;left:119px;top:1397px;overflow:visible;" width="22" height="28" viewBox="0 0 22 28"><rect x="0" y="3" width="22" height="4" fill="#6e6e6e"/><rect x="7" y="0" width="8" height="4" fill="#6e6e6e"/><path d="M2 9 H20 L19 26 q0 1 -1 1 H4 q-1 0 -1 -1 Z" fill="#6e6e6e"/></svg>
<div style="position:absolute;left:161px;top:1122px;width:2999px;height:686px;overflow:hidden">
<div style="position:absolute;left:21.0px;top:-7.9px;font-family:'Liberation Mono', monospace;font-size:28px;letter-spacing:-0.803px;color:#080808;white-space:pre;line-height:normal;-webkit-text-stroke-width:0.9px;">  .   </div><div style="position:absolute;left:119.0px;top:13.8px;width:12px;height:3px;background:#080808"></div><div style="position:absolute;left:135.0px;top:13.8px;width:12px;height:3px;background:#080808"></div><div style="position:absolute;left:151.0px;top:13.8px;width:12px;height:3px;background:#080808"></div><div style="position:absolute;left:167.0px;top:13.8px;width:12px;height:3px;background:#080808"></div><div style="position:absolute;left:181.0px;top:-7.9px;font-family:'Liberation Mono', monospace;font-size:28px;letter-spacing:-0.803px;color:#080808;white-space:pre;line-height:normal;-webkit-text-stroke-width:0.9px;">          </div><div style="position:absolute;left:343.0px;top:13.8px;width:12px;height:3px;background:#080808"></div><div style="position:absolute;left:357.0px;top:-7.9px;font-family:'Liberation Mono', monospace;font-size:28px;letter-spacing:-0.803px;color:#080808;white-space:pre;line-height:normal;-webkit-text-stroke-width:0.9px;">            </div><div style="position:absolute;left:551.0px;top:13.8px;width:12px;height:3px;background:#080808"></div><div style="position:absolute;left:567.0px;top:13.8px;width:12px;height:3px;background:#080808"></div><div style="position:absolute;left:581.0px;top:-7.9px;font-family:'Liberation Mono', monospace;font-size:28px;letter-spacing:-0.803px;color:#080808;white-space:pre;line-height:normal;-webkit-text-stroke-width:0.9px;"> </div><div style="position:absolute;left:599.0px;top:13.8px;width:12px;height:3px;background:#080808"></div><div style="position:absolute;left:613.0px;top:-7.9px;font-family:'Liberation Mono', monospace;font-size:28px;letter-spacing:-0.803px;color:#080808;white-space:pre;line-height:normal;-webkit-text-stroke-width:0.9px;"> </div><div style="position:absolute;left:631.0px;top:13.8px;width:12px;height:3px;background:#080808"></div>
<div style="position:absolute;left:21.0px;top:35.8px;font-family:'Liberation Mono', monospace;font-size:28px;letter-spacing:-0.803px;color:#080808;white-space:pre;line-height:normal;-webkit-text-stroke-width:0.9px;"> /\\ / </div><div style="position:absolute;left:135.0px;top:57.5px;width:12px;height:3px;background:#080808"></div><div style="position:absolute;left:151.0px;top:57.5px;width:12px;height:3px;background:#080808"></div><div style="position:absolute;left:167.0px;top:57.5px;width:12px;height:3px;background:#080808"></div><div style="position:absolute;left:181.0px;top:35.8px;font-family:'Liberation Mono', monospace;font-size:28px;letter-spacing:-0.803px;color:#080808;white-space:pre;line-height:normal;-webkit-text-stroke-width:0.9px;">&#x27;</div><div style="position:absolute;left:199.0px;top:57.5px;width:12px;height:3px;background:#080808"></div><div style="position:absolute;left:213.0px;top:35.8px;font-family:'Liberation Mono', monospace;font-size:28px;letter-spacing:-0.803px;color:#080808;white-space:pre;line-height:normal;-webkit-text-stroke-width:0.9px;"> </div><div style="position:absolute;left:231.0px;top:57.5px;width:12px;height:3px;background:#080808"></div><div style="position:absolute;left:247.0px;top:57.5px;width:12px;height:3px;background:#080808"></div><div style="position:absolute;left:261.0px;top:35.8px;font-family:'Liberation Mono', monospace;font-size:28px;letter-spacing:-0.803px;color:#080808;white-space:pre;line-height:normal;-webkit-text-stroke-width:0.9px;"> </div><div style="position:absolute;left:279.0px;top:57.5px;width:12px;height:3px;background:#080808"></div><div style="position:absolute;left:293.0px;top:35.8px;font-family:'Liberation Mono', monospace;font-size:28px;letter-spacing:-0.803px;color:#080808;white-space:pre;line-height:normal;-webkit-text-stroke-width:0.9px;"> </div><div style="position:absolute;left:311.0px;top:57.5px;width:12px;height:3px;background:#080808"></div><div style="position:absolute;left:325.0px;top:35.8px;font-family:'Liberation Mono', monospace;font-size:28px;letter-spacing:-0.803px;color:#080808;white-space:pre;line-height:normal;-webkit-text-stroke-width:0.9px;">(</div><div style="position:absolute;left:343.0px;top:57.5px;width:12px;height:3px;background:#080808"></div><div style="position:absolute;left:357.0px;top:35.8px;font-family:'Liberation Mono', monospace;font-size:28px;letter-spacing:-0.803px;color:#080808;white-space:pre;line-height:normal;-webkit-text-stroke-width:0.9px;">)</div><div style="position:absolute;left:375.0px;top:57.5px;width:12px;height:3px;background:#080808"></div><div style="position:absolute;left:389.0px;top:35.8px;font-family:'Liberation Mono', monospace;font-size:28px;letter-spacing:-0.803px;color:#080808;white-space:pre;line-height:normal;-webkit-text-stroke-width:0.9px;"> </div><div style="position:absolute;left:407.0px;top:57.5px;width:12px;height:3px;background:#080808"></div><div style="position:absolute;left:423.0px;top:57.5px;width:12px;height:3px;background:#080808"></div><div style="position:absolute;left:437.0px;top:35.8px;font-family:'Liberation Mono', monospace;font-size:28px;letter-spacing:-0.803px;color:#080808;white-space:pre;line-height:normal;-webkit-text-stroke-width:0.9px;">  </div><div style="position:absolute;left:471.0px;top:57.5px;width:12px;height:3px;background:#080808"></div><div style="position:absolute;left:487.0px;top:57.5px;width:12px;height:3px;background:#080808"></div><div style="position:absolute;left:501.0px;top:35.8px;font-family:'Liberation Mono', monospace;font-size:28px;letter-spacing:-0.803px;color:#080808;white-space:pre;line-height:normal;-webkit-text-stroke-width:0.9px;"> </div><div style="position:absolute;left:519.0px;top:57.5px;width:12px;height:3px;background:#080808"></div><div style="position:absolute;left:533.0px;top:35.8px;font-family:'Liberation Mono', monospace;font-size:28px;letter-spacing:-0.803px;color:#080808;white-space:pre;line-height:normal;-webkit-text-stroke-width:0.9px;"> \ \ \ \</div>
<div style="position:absolute;left:21.0px;top:79.5px;font-family:'Liberation Mono', monospace;font-size:28px;letter-spacing:-0.803px;color:#080808;white-space:pre;line-height:normal;-webkit-text-stroke-width:0.9px;">( ( )\</div><div style="position:absolute;left:119.0px;top:101.3px;width:12px;height:3px;background:#080808"></div><div style="position:absolute;left:135.0px;top:101.3px;width:12px;height:3px;background:#080808"></div><div style="position:absolute;left:151.0px;top:101.3px;width:12px;height:3px;background:#080808"></div><div style="position:absolute;left:165.0px;top:79.5px;font-family:'Liberation Mono', monospace;font-size:28px;letter-spacing:-0.803px;color:#080808;white-space:pre;line-height:normal;-webkit-text-stroke-width:0.9px;"> | &#x27;</div><div style="position:absolute;left:231.0px;top:101.3px;width:12px;height:3px;background:#080808"></div><div style="position:absolute;left:245.0px;top:79.5px;font-family:'Liberation Mono', monospace;font-size:28px;letter-spacing:-0.803px;color:#080808;white-space:pre;line-height:normal;-webkit-text-stroke-width:0.9px;"> | &#x27;</div><div style="position:absolute;left:311.0px;top:101.3px;width:12px;height:3px;background:#080808"></div><div style="position:absolute;left:325.0px;top:79.5px;font-family:'Liberation Mono', monospace;font-size:28px;letter-spacing:-0.803px;color:#080808;white-space:pre;line-height:normal;-webkit-text-stroke-width:0.9px;">| | &#x27;</div><div style="position:absolute;left:407.0px;top:101.3px;width:12px;height:3px;background:#080808"></div><div style="position:absolute;left:421.0px;top:79.5px;font-family:'Liberation Mono', monospace;font-size:28px;letter-spacing:-0.803px;color:#080808;white-space:pre;line-height:normal;-webkit-text-stroke-width:0.9px;"> \/ </div><div style="position:absolute;left:487.0px;top:101.3px;width:12px;height:3px;background:#080808"></div><div style="position:absolute;left:501.0px;top:79.5px;font-family:'Liberation Mono', monospace;font-size:28px;letter-spacing:-0.803px;color:#080808;white-space:pre;line-height:normal;-webkit-text-stroke-width:0.9px;">` | \ \ \ \</div>
<div style="position:absolute;left:21.0px;top:123.3px;font-family:'Liberation Mono', monospace;font-size:28px;letter-spacing:-0.803px;color:#080808;white-space:pre;line-height:normal;-webkit-text-stroke-width:0.9px;"> \\/  </div><div style="position:absolute;left:119.0px;top:145.0px;width:12px;height:3px;background:#080808"></div><div style="position:absolute;left:135.0px;top:145.0px;width:12px;height:3px;background:#080808"></div><div style="position:absolute;left:151.0px;top:145.0px;width:12px;height:3px;background:#080808"></div><div style="position:absolute;left:165.0px;top:123.3px;font-family:'Liberation Mono', monospace;font-size:28px;letter-spacing:-0.803px;color:#080808;white-space:pre;line-height:normal;-webkit-text-stroke-width:0.9px;">)| |</div><div style="position:absolute;left:231.0px;top:145.0px;width:12px;height:3px;background:#080808"></div><div style="position:absolute;left:245.0px;top:123.3px;font-family:'Liberation Mono', monospace;font-size:28px;letter-spacing:-0.803px;color:#080808;white-space:pre;line-height:normal;-webkit-text-stroke-width:0.9px;">)| | | | | || (</div><div style="position:absolute;left:487.0px;top:145.0px;width:12px;height:3px;background:#080808"></div><div style="position:absolute;left:501.0px;top:123.3px;font-family:'Liberation Mono', monospace;font-size:28px;letter-spacing:-0.803px;color:#080808;white-space:pre;line-height:normal;-webkit-text-stroke-width:0.9px;">| |  ) ) ) )</div>
<div style="position:absolute;left:21.0px;top:167.0px;font-family:'Liberation Mono', monospace;font-size:28px;letter-spacing:-0.803px;color:#080808;white-space:pre;line-height:normal;-webkit-text-stroke-width:0.9px;">  &#x27;  |</div><div style="position:absolute;left:119.0px;top:188.7px;width:12px;height:3px;background:#080808"></div><div style="position:absolute;left:135.0px;top:188.7px;width:12px;height:3px;background:#080808"></div><div style="position:absolute;left:151.0px;top:188.7px;width:12px;height:3px;background:#080808"></div><div style="position:absolute;left:167.0px;top:188.7px;width:12px;height:3px;background:#080808"></div><div style="position:absolute;left:181.0px;top:167.0px;font-family:'Liberation Mono', monospace;font-size:28px;letter-spacing:-0.803px;color:#080808;white-space:pre;line-height:normal;-webkit-text-stroke-width:0.9px;">| .</div><div style="position:absolute;left:231.0px;top:188.7px;width:12px;height:3px;background:#080808"></div><div style="position:absolute;left:247.0px;top:188.7px;width:12px;height:3px;background:#080808"></div><div style="position:absolute;left:261.0px;top:167.0px;font-family:'Liberation Mono', monospace;font-size:28px;letter-spacing:-0.803px;color:#080808;white-space:pre;line-height:normal;-webkit-text-stroke-width:0.9px;">|</div><div style="position:absolute;left:279.0px;top:188.7px;width:12px;height:3px;background:#080808"></div><div style="position:absolute;left:293.0px;top:167.0px;font-family:'Liberation Mono', monospace;font-size:28px;letter-spacing:-0.803px;color:#080808;white-space:pre;line-height:normal;-webkit-text-stroke-width:0.9px;">| |</div><div style="position:absolute;left:343.0px;top:188.7px;width:12px;height:3px;background:#080808"></div><div style="position:absolute;left:357.0px;top:167.0px;font-family:'Liberation Mono', monospace;font-size:28px;letter-spacing:-0.803px;color:#080808;white-space:pre;line-height:normal;-webkit-text-stroke-width:0.9px;">|</div><div style="position:absolute;left:375.0px;top:188.7px;width:12px;height:3px;background:#080808"></div><div style="position:absolute;left:389.0px;top:167.0px;font-family:'Liberation Mono', monospace;font-size:28px;letter-spacing:-0.803px;color:#080808;white-space:pre;line-height:normal;-webkit-text-stroke-width:0.9px;">| |</div><div style="position:absolute;left:439.0px;top:188.7px;width:12px;height:3px;background:#080808"></div><div style="position:absolute;left:453.0px;top:167.0px;font-family:'Liberation Mono', monospace;font-size:28px;letter-spacing:-0.803px;color:#080808;white-space:pre;line-height:normal;-webkit-text-stroke-width:0.9px;">\</div><div style="position:absolute;left:471.0px;top:188.7px;width:12px;height:3px;background:#080808"></div><div style="position:absolute;left:487.0px;top:188.7px;width:12px;height:3px;background:#080808"></div><div style="position:absolute;left:501.0px;top:167.0px;font-family:'Liberation Mono', monospace;font-size:28px;letter-spacing:-0.803px;color:#080808;white-space:pre;line-height:normal;-webkit-text-stroke-width:0.9px;">, | / / / /</div>
<div style="position:absolute;left:21.0px;top:210.7px;font-family:'Liberation Mono', monospace;font-size:28px;letter-spacing:-0.803px;color:#080808;white-space:pre;line-height:normal;-webkit-text-stroke-width:0.9px;"> =========|</div><div style="position:absolute;left:199.0px;top:232.4px;width:12px;height:3px;background:#080808"></div><div style="position:absolute;left:213.0px;top:210.7px;font-family:'Liberation Mono', monospace;font-size:28px;letter-spacing:-0.803px;color:#080808;white-space:pre;line-height:normal;-webkit-text-stroke-width:0.9px;">|==============|</div><div style="position:absolute;left:471.0px;top:232.4px;width:12px;height:3px;background:#080808"></div><div style="position:absolute;left:487.0px;top:232.4px;width:12px;height:3px;background:#080808"></div><div style="position:absolute;left:503.0px;top:232.4px;width:12px;height:3px;background:#080808"></div><div style="position:absolute;left:517.0px;top:210.7px;font-family:'Liberation Mono', monospace;font-size:28px;letter-spacing:-0.803px;color:#080808;white-space:pre;line-height:normal;-webkit-text-stroke-width:0.9px;">/=/</div><div style="position:absolute;left:567.0px;top:232.4px;width:12px;height:3px;background:#080808"></div><div style="position:absolute;left:581.0px;top:210.7px;font-family:'Liberation Mono', monospace;font-size:28px;letter-spacing:-0.803px;color:#080808;white-space:pre;line-height:normal;-webkit-text-stroke-width:0.9px;">/</div><div style="position:absolute;left:599.0px;top:232.4px;width:12px;height:3px;background:#080808"></div><div style="position:absolute;left:613.0px;top:210.7px;font-family:'Liberation Mono', monospace;font-size:28px;letter-spacing:-0.803px;color:#080808;white-space:pre;line-height:normal;-webkit-text-stroke-width:0.9px;">/</div><div style="position:absolute;left:631.0px;top:232.4px;width:12px;height:3px;background:#080808"></div><div style="position:absolute;left:645.0px;top:210.7px;font-family:'Liberation Mono', monospace;font-size:28px;letter-spacing:-0.803px;color:#080808;white-space:pre;line-height:normal;-webkit-text-stroke-width:0.9px;">/</div>
<div style="position:absolute;left:21.0px;top:254.4px;font-family:'Liberation Mono', monospace;font-size:28px;letter-spacing:-0.803px;color:#080808;white-space:pre;line-height:normal;-webkit-text-stroke-width:0.9px;"> </div><div style="position:absolute;left:37.0px;top:254.4px;font-family:'Liberation Mono', monospace;font-size:28px;letter-spacing:-0.803px;color:#0a7c1a;white-space:pre;line-height:normal;-webkit-text-stroke-width:0.9px;">:: Spring Boot ::</div><div style="position:absolute;left:309.0px;top:254.4px;font-family:'Liberation Mono', monospace;font-size:28px;letter-spacing:-0.803px;color:#080808;white-space:pre;line-height:normal;-webkit-text-stroke-width:0.9px;">        (v2.3.9.RELEASE)</div>
<div style="position:absolute;left:21.0px;top:341.9px;font-family:'Liberation Mono', monospace;font-size:28px;letter-spacing:-0.803px;color:#080808;white-space:pre;line-height:normal;-webkit-text-stroke-width:0.9px;">10-31 14:53:14:054  </div><div style="position:absolute;left:341.0px;top:341.9px;font-family:'Liberation Mono', monospace;font-size:28px;letter-spacing:-0.803px;color:#0a7c1a;white-space:pre;line-height:normal;-webkit-text-stroke-width:0.9px;">INFO</div><div style="position:absolute;left:405.0px;top:341.9px;font-family:'Liberation Mono', monospace;font-size:28px;letter-spacing:-0.803px;color:#080808;white-space:pre;line-height:normal;-webkit-text-stroke-width:0.9px;"> </div><div style="position:absolute;left:421.0px;top:341.9px;font-family:'Liberation Mono', monospace;font-size:28px;letter-spacing:-0.803px;color:#b200b2;white-space:pre;line-height:normal;-webkit-text-stroke-width:0.9px;">17232</div><div style="position:absolute;left:501.0px;top:341.9px;font-family:'Liberation Mono', monospace;font-size:28px;letter-spacing:-0.803px;color:#080808;white-space:pre;line-height:normal;-webkit-text-stroke-width:0.9px;"> --- [           main] </div><div style="position:absolute;left:869.0px;top:341.9px;font-family:'Liberation Mono', monospace;font-size:28px;letter-spacing:-0.803px;color:#0b8a8a;white-space:pre;line-height:normal;-webkit-text-stroke-width:0.9px;">cn.itcast.mq.ConsumerApplication        </div><div style="position:absolute;left:1509.0px;top:341.9px;font-family:'Liberation Mono', monospace;font-size:28px;letter-spacing:-0.803px;color:#080808;white-space:pre;line-height:normal;-webkit-text-stroke-width:0.9px;"> : Starting ConsumerApplication on DingJiaxiong with PID 17232</div>
<div style="position:absolute;left:21.0px;top:385.6px;font-family:'Liberation Mono', monospace;font-size:28px;letter-spacing:-0.803px;color:#080808;white-space:pre;line-height:normal;-webkit-text-stroke-width:0.9px;"> (</div><div style="position:absolute;left:53.0px;top:385.6px;font-family:'Liberation Mono', monospace;font-size:28px;letter-spacing:-0.803px;color:#1f63c9;white-space:pre;line-height:normal;-webkit-text-stroke-width:0.9px;">D:\DingJiaxiong\IdeaProjects\mq-demo\consumer\target\classes</div><div style="position:absolute;left:1013.0px;top:385.6px;font-family:'Liberation Mono', monospace;font-size:28px;letter-spacing:-0.803px;color:#080808;white-space:pre;line-height:normal;-webkit-text-stroke-width:0.9px;"> started by DingJiaxiong in D:\DingJiaxiong\IdeaProjects\mq-demo)</div>
<div style="position:absolute;left:21.0px;top:429.4px;font-family:'Liberation Mono', monospace;font-size:28px;letter-spacing:-0.803px;color:#080808;white-space:pre;line-height:normal;-webkit-text-stroke-width:0.9px;">10-31 14:53:14:055  </div><div style="position:absolute;left:341.0px;top:429.4px;font-family:'Liberation Mono', monospace;font-size:28px;letter-spacing:-0.803px;color:#0a7c1a;white-space:pre;line-height:normal;-webkit-text-stroke-width:0.9px;">INFO</div><div style="position:absolute;left:405.0px;top:429.4px;font-family:'Liberation Mono', monospace;font-size:28px;letter-spacing:-0.803px;color:#080808;white-space:pre;line-height:normal;-webkit-text-stroke-width:0.9px;"> </div><div style="position:absolute;left:421.0px;top:429.4px;font-family:'Liberation Mono', monospace;font-size:28px;letter-spacing:-0.803px;color:#b200b2;white-space:pre;line-height:normal;-webkit-text-stroke-width:0.9px;">17232</div><div style="position:absolute;left:501.0px;top:429.4px;font-family:'Liberation Mono', monospace;font-size:28px;letter-spacing:-0.803px;color:#080808;white-space:pre;line-height:normal;-webkit-text-stroke-width:0.9px;"> --- [           main] </div><div style="position:absolute;left:869.0px;top:429.4px;font-family:'Liberation Mono', monospace;font-size:28px;letter-spacing:-0.803px;color:#0b8a8a;white-space:pre;line-height:normal;-webkit-text-stroke-width:0.9px;">cn.itcast.mq.ConsumerApplication        </div><div style="position:absolute;left:1509.0px;top:429.4px;font-family:'Liberation Mono', monospace;font-size:28px;letter-spacing:-0.803px;color:#080808;white-space:pre;line-height:normal;-webkit-text-stroke-width:0.9px;"> : No active profile set, falling back to default profiles: default</div>
<div style="position:absolute;left:21.0px;top:473.1px;font-family:'Liberation Mono', monospace;font-size:28px;letter-spacing:-0.803px;color:#080808;white-space:pre;line-height:normal;-webkit-text-stroke-width:0.9px;">10-31 14:53:14:488  </div><div style="position:absolute;left:341.0px;top:473.1px;font-family:'Liberation Mono', monospace;font-size:28px;letter-spacing:-0.803px;color:#0a7c1a;white-space:pre;line-height:normal;-webkit-text-stroke-width:0.9px;">INFO</div><div style="position:absolute;left:405.0px;top:473.1px;font-family:'Liberation Mono', monospace;font-size:28px;letter-spacing:-0.803px;color:#080808;white-space:pre;line-height:normal;-webkit-text-stroke-width:0.9px;"> </div><div style="position:absolute;left:421.0px;top:473.1px;font-family:'Liberation Mono', monospace;font-size:28px;letter-spacing:-0.803px;color:#b200b2;white-space:pre;line-height:normal;-webkit-text-stroke-width:0.9px;">17232</div><div style="position:absolute;left:501.0px;top:473.1px;font-family:'Liberation Mono', monospace;font-size:28px;letter-spacing:-0.803px;color:#080808;white-space:pre;line-height:normal;-webkit-text-stroke-width:0.9px;"> --- [           main] </div><div style="position:absolute;left:869.0px;top:473.1px;font-family:'Liberation Mono', monospace;font-size:28px;letter-spacing:-0.803px;color:#0b8a8a;white-space:pre;line-height:normal;-webkit-text-stroke-width:0.9px;">o.s.a.r.c.CachingConnectionFactory      </div><div style="position:absolute;left:1509.0px;top:473.1px;font-family:'Liberation Mono', monospace;font-size:28px;letter-spacing:-0.803px;color:#080808;white-space:pre;line-height:normal;-webkit-text-stroke-width:0.9px;"> : Attempting to connect to: [118.195.240.188:5672]</div>
<div style="position:absolute;left:21.0px;top:516.8px;font-family:'Liberation Mono', monospace;font-size:28px;letter-spacing:-0.803px;color:#080808;white-space:pre;line-height:normal;-webkit-text-stroke-width:0.9px;">10-31 14:53:14:814  </div><div style="position:absolute;left:341.0px;top:516.8px;font-family:'Liberation Mono', monospace;font-size:28px;letter-spacing:-0.803px;color:#0a7c1a;white-space:pre;line-height:normal;-webkit-text-stroke-width:0.9px;">INFO</div><div style="position:absolute;left:405.0px;top:516.8px;font-family:'Liberation Mono', monospace;font-size:28px;letter-spacing:-0.803px;color:#080808;white-space:pre;line-height:normal;-webkit-text-stroke-width:0.9px;"> </div><div style="position:absolute;left:421.0px;top:516.8px;font-family:'Liberation Mono', monospace;font-size:28px;letter-spacing:-0.803px;color:#b200b2;white-space:pre;line-height:normal;-webkit-text-stroke-width:0.9px;">17232</div><div style="position:absolute;left:501.0px;top:516.8px;font-family:'Liberation Mono', monospace;font-size:28px;letter-spacing:-0.803px;color:#080808;white-space:pre;line-height:normal;-webkit-text-stroke-width:0.9px;"> --- [           main] </div><div style="position:absolute;left:869.0px;top:516.8px;font-family:'Liberation Mono', monospace;font-size:28px;letter-spacing:-0.803px;color:#0b8a8a;white-space:pre;line-height:normal;-webkit-text-stroke-width:0.9px;">o.s.a.r.c.CachingConnectionFactory      </div><div style="position:absolute;left:1509.0px;top:516.8px;font-family:'Liberation Mono', monospace;font-size:28px;letter-spacing:-0.803px;color:#080808;white-space:pre;line-height:normal;-webkit-text-stroke-width:0.9px;"> : Created new connection: rabbitConnectionFactory#205b132e:0/SimpleConnection@588307f7</div>
<div style="position:absolute;left:21.0px;top:560.5px;font-family:'Liberation Mono', monospace;font-size:28px;letter-spacing:-0.803px;color:#080808;white-space:pre;line-height:normal;-webkit-text-stroke-width:0.9px;"> [delegate=amqp://itcast@118.195.240.188:5672/, localPort= 3333]</div>
<div style="position:absolute;left:21.0px;top:604.3px;font-family:'Liberation Mono', monospace;font-size:28px;letter-spacing:-0.803px;color:#080808;white-space:pre;line-height:normal;-webkit-text-stroke-width:0.9px;">10-31 14:53:20:509  </div><div style="position:absolute;left:341.0px;top:604.3px;font-family:'Liberation Mono', monospace;font-size:28px;letter-spacing:-0.803px;color:#0a7c1a;white-space:pre;line-height:normal;-webkit-text-stroke-width:0.9px;">INFO</div><div style="position:absolute;left:405.0px;top:604.3px;font-family:'Liberation Mono', monospace;font-size:28px;letter-spacing:-0.803px;color:#080808;white-space:pre;line-height:normal;-webkit-text-stroke-width:0.9px;"> </div><div style="position:absolute;left:421.0px;top:604.3px;font-family:'Liberation Mono', monospace;font-size:28px;letter-spacing:-0.803px;color:#b200b2;white-space:pre;line-height:normal;-webkit-text-stroke-width:0.9px;">17232</div><div style="position:absolute;left:501.0px;top:604.3px;font-family:'Liberation Mono', monospace;font-size:28px;letter-spacing:-0.803px;color:#080808;white-space:pre;line-height:normal;-webkit-text-stroke-width:0.9px;"> --- [           main] </div><div style="position:absolute;left:869.0px;top:604.3px;font-family:'Liberation Mono', monospace;font-size:28px;letter-spacing:-0.803px;color:#0b8a8a;white-space:pre;line-height:normal;-webkit-text-stroke-width:0.9px;">cn.itcast.mq.ConsumerApplication        </div><div style="position:absolute;left:1509.0px;top:604.3px;font-family:'Liberation Mono', monospace;font-size:28px;letter-spacing:-0.803px;color:#080808;white-space:pre;line-height:normal;-webkit-text-stroke-width:0.9px;"> : Started ConsumerApplication in 6.625 seconds (JVM running for 6.917)</div>
<div style="position:absolute;left:53px;top:412.9px;width:960px;height:2px;background:#1f63c9"></div>
<div style="position:absolute;left:21px;top:646px;width:4px;height:35px;background:#000"></div>
</div>
<div style="position:absolute;left:3140px;top:1213px;width:20px;height:595px;background:#e0e0e0;"></div>
<div style="position:absolute;left:0px;top:1806px;width:3200px;height:2px;background:#d0d0d0;"></div>
<div style="position:absolute;left:0px;top:1808px;width:3200px;height:39px;background:#f2f2f2;"></div>
<div style="position:absolute;left:292px;top:1808px;width:112px;height:39px;background:#c4c4c4;"></div>
<svg style="position:absolute;left:70px;top:1820px;overflow:visible;" width="22" height="24" viewBox="0 0 22 24"><circle cx="5" cy="4" r="3.3" fill="#6e6e6e"/><circle cx="5" cy="20" r="3.3" fill="#6e6e6e"/><circle cx="17" cy="7" r="3.3" fill="#6e6e6e"/><path d="M5 4 V20 M17 7 q0 8 -12 10" stroke="#6e6e6e" stroke-width="2.6" fill="none"/></svg>
<div style="position:absolute;left:102.3px;top:1818.54px;font-family:'Liberation Sans', sans-serif;font-size:25.5px;color:#000;font-weight:400;white-space:pre;line-height:normal;transform:scaleX(0.9367);transform-origin:0 0;">Version Control</div>
<svg style="position:absolute;left:312px;top:1820px;overflow:visible;" width="26" height="26" viewBox="0 0 26 26"><path d="M2 2 L20 12.5 L2 23 Z" fill="#6e6e6e"/><circle cx="20" cy="21" r="4.5" fill="#3fc43f"/></svg>
<div style="position:absolute;left:344.8px;top:1818.54px;font-family:'Liberation Sans', sans-serif;font-size:25.5px;color:#000;font-weight:400;white-space:pre;line-height:normal;transform:scaleX(0.8487);transform-origin:0 0;">Run</div>
<svg style="position:absolute;left:427px;top:1822px;overflow:visible;" width="22" height="20" viewBox="0 0 22 20"><path d="M0 2 h4 M8 2 h14 M0 9 h4 M8 9 h14 M0 16 h4 M8 16 h14" stroke="#6e6e6e" stroke-width="3"/></svg>
<div style="position:absolute;left:458.6px;top:1818.54px;font-family:'Liberation Sans', sans-serif;font-size:25.5px;color:#000;font-weight:400;white-space:pre;line-height:normal;transform:scaleX(0.8825);transform-origin:0 0;">TODO</div>
<svg style="position:absolute;left:568px;top:1819px;overflow:visible;" width="22" height="22" viewBox="0 0 22 22"><circle cx="11" cy="11" r="10" fill="#6e6e6e"/><rect x="9.5" y="4" width="3" height="9" fill="#f2f2f2"/><rect x="9.5" y="15" width="3" height="3" fill="#f2f2f2"/></svg>
<div style="position:absolute;left:600.5px;top:1818.54px;font-family:'Liberation Sans', sans-serif;font-size:25.5px;color:#000;font-weight:400;white-space:pre;line-height:normal;transform:scaleX(0.9015);transform-origin:0 0;">Problems</div>
<svg style="position:absolute;left:738px;top:1819px;overflow:visible;" width="26" height="22" viewBox="0 0 26 22"><path d="M1 20 q0-18 24-19 q-2 18-18 19 q-4 0-6 0z" fill="#6e6e6e"/></svg>
<div style="position:absolute;left:772px;top:1818.54px;font-family:'Liberation Sans', sans-serif;font-size:25.5px;color:#000;font-weight:400;white-space:pre;line-height:normal;transform:scaleX(0.9157);transform-origin:0 0;">Spring</div>
<svg style="position:absolute;left:885px;top:1819px;overflow:visible;" width="24" height="22" viewBox="0 0 24 22"><rect x="0" y="0" width="24" height="21" fill="#6e6e6e"/><path d="M4 5 L9 9 L4 13 M11 15 H18" stroke="#f2f2f2" stroke-width="2" fill="none"/></svg>
<div style="position:absolute;left:917.8px;top:1818.54px;font-family:'Liberation Sans', sans-serif;font-size:25.5px;color:#000;font-weight:400;white-space:pre;line-height:normal;transform:scaleX(0.9464);transform-origin:0 0;">Terminal</div>
<svg style="position:absolute;left:1052px;top:1818px;overflow:visible;" width="26" height="26" viewBox="0 0 26 26"><path d="M7 1 H19 L25 13 L19 25 H7 L1 13 Z" fill="#6e6e6e"/><path d="M10 7 L19 13 L10 19 Z" fill="#f2f2f2"/></svg>
<div style="position:absolute;left:1086.3px;top:1818.54px;font-family:'Liberation Sans', sans-serif;font-size:25.5px;color:#000;font-weight:400;white-space:pre;line-height:normal;transform:scaleX(0.8509);transform-origin:0 0;">Services</div>
<svg style="position:absolute;left:1210px;top:1818px;overflow:visible;" width="26" height="28" viewBox="0 0 26 28"><path d="M18 4 A9 9 0 1 0 9 21" fill="none" stroke="#6e6e6e" stroke-width="2.4"/><path d="M11 7 V13 L8 16" stroke="#6e6e6e" stroke-width="2" fill="none"/><path d="M13 12 L25 19 L13 26 Z" fill="#6e6e6e"/></svg>
<div style="position:absolute;left:1244px;top:1818.54px;font-family:'Liberation Sans', sans-serif;font-size:25.5px;color:#000;font-weight:400;white-space:pre;line-height:normal;transform:scaleX(0.9285);transform-origin:0 0;">Profiler</div>
<svg style="position:absolute;left:1357px;top:1818px;overflow:visible;" width="26" height="26" viewBox="0 0 26 26"><path d="M1 9 L9 1 L15 1 L12 4 L24 16 L20 21 L8 9 L5 12 Z" fill="#6e6e6e"/></svg>
<div style="position:absolute;left:1392.7px;top:1818.54px;font-family:'Liberation Sans', sans-serif;font-size:25.5px;color:#000;font-weight:400;white-space:pre;line-height:normal;transform:scaleX(0.9223);transform-origin:0 0;">Build</div>
<svg style="position:absolute;left:1490px;top:1818px;overflow:visible;" width="26" height="28" viewBox="0 0 26 28"><path d="M1 7 L13 1 L25 7 L13 13 Z" fill="#6e6e6e"/><path d="M1 13 L13 19 L25 13 M1 19 L13 25 L25 19" fill="none" stroke="#6e6e6e" stroke-width="2.4"/></svg>
<div style="position:absolute;left:1525px;top:1818.54px;font-family:'Liberation Sans', sans-serif;font-size:25.5px;color:#000;font-weight:400;white-space:pre;line-height:normal;transform:scaleX(0.8955);transform-origin:0 0;">Dependencies</div>
<div style="position:absolute;left:3004.8px;top:1816.69px;font-family:'Liberation Sans', sans-serif;font-size:18.6px;color:#8c8c8c;font-weight:400;white-space:pre;line-height:normal;transform:scaleX(0.9511);transform-origin:0 0;">CSDN @Ding Jiaxiong</div></body></html>
